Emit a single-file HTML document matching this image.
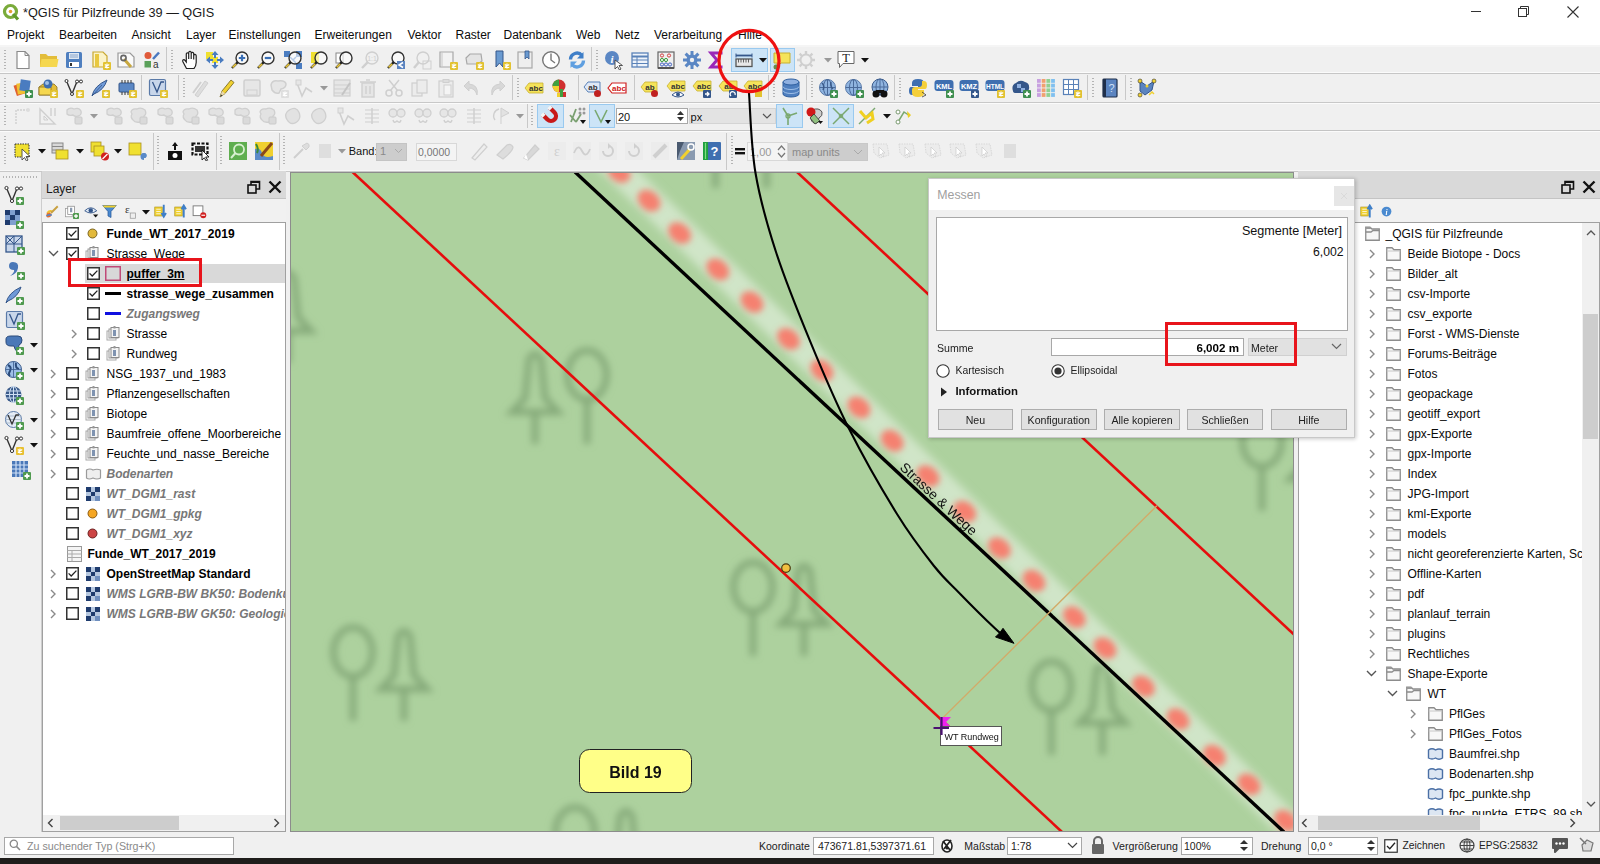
<!DOCTYPE html><html><head><meta charset="utf-8"><style>
html,body{margin:0;padding:0;}
body{width:1600px;height:864px;overflow:hidden;position:relative;background:#f0f0f0;font-family:"Liberation Sans",sans-serif;}
.t{position:absolute;white-space:pre;}
.r{position:absolute;}
</style></head><body>
<div class="r" style="left:0px;top:0px;width:1600px;height:45px;background:#fff;"></div>
<svg class="r" style="left:2px;top:3px;" width="18" height="18" viewBox="0 0 18 18"><circle cx="8.5" cy="8.5" r="6" fill="none" stroke="#7aab3a" stroke-width="3.2"/><path d="M11 11 L16 16.5" stroke="#5f9a2b" stroke-width="3.2"/><circle cx="8.5" cy="8.5" r="1.8" fill="#e0a030"/></svg>
<div class="t" style="left:23px;top:6.85px;font-size:12.7px;line-height:12.7px;font-weight:400;color:#1a1a1a;font-style:normal;">*QGIS für Pilzfreunde 39 — QGIS</div>
<div class="r" style="left:1471px;top:11px;width:10px;height:1px;background:#333;"></div>
<svg class="r" style="left:1518px;top:6px;" width="12" height="12" viewBox="0 0 12 12"><rect x="0.5" y="2.5" width="8" height="8" fill="none" stroke="#333"/><path d="M2.5 2.5 V0.5 H10.5 V8.5 H8.5" fill="none" stroke="#333"/></svg>
<svg class="r" style="left:1567px;top:6px;" width="12" height="12" viewBox="0 0 12 12"><path d="M0.5 0.5 L11.5 11.5 M11.5 0.5 L0.5 11.5" stroke="#333" stroke-width="1.1"/></svg>
<div class="t" style="left:7px;top:29.24px;font-size:12px;line-height:12px;font-weight:400;color:#0c0c0c;font-style:normal;">Projekt</div>
<div class="t" style="left:59px;top:29.24px;font-size:12px;line-height:12px;font-weight:400;color:#0c0c0c;font-style:normal;">Bearbeiten</div>
<div class="t" style="left:131.5px;top:29.24px;font-size:12px;line-height:12px;font-weight:400;color:#0c0c0c;font-style:normal;">Ansicht</div>
<div class="t" style="left:186px;top:29.24px;font-size:12px;line-height:12px;font-weight:400;color:#0c0c0c;font-style:normal;">Layer</div>
<div class="t" style="left:228.5px;top:29.24px;font-size:12px;line-height:12px;font-weight:400;color:#0c0c0c;font-style:normal;">Einstellungen</div>
<div class="t" style="left:314.5px;top:29.24px;font-size:12px;line-height:12px;font-weight:400;color:#0c0c0c;font-style:normal;">Erweiterungen</div>
<div class="t" style="left:407.5px;top:29.24px;font-size:12px;line-height:12px;font-weight:400;color:#0c0c0c;font-style:normal;">Vektor</div>
<div class="t" style="left:455.5px;top:29.24px;font-size:12px;line-height:12px;font-weight:400;color:#0c0c0c;font-style:normal;">Raster</div>
<div class="t" style="left:503.5px;top:29.24px;font-size:12px;line-height:12px;font-weight:400;color:#0c0c0c;font-style:normal;">Datenbank</div>
<div class="t" style="left:576px;top:29.24px;font-size:12px;line-height:12px;font-weight:400;color:#0c0c0c;font-style:normal;">Web</div>
<div class="t" style="left:615px;top:29.24px;font-size:12px;line-height:12px;font-weight:400;color:#0c0c0c;font-style:normal;">Netz</div>
<div class="t" style="left:654px;top:29.24px;font-size:12px;line-height:12px;font-weight:400;color:#0c0c0c;font-style:normal;">Verarbeitung</div>
<div class="t" style="left:738px;top:29.24px;font-size:12px;line-height:12px;font-weight:400;color:#0c0c0c;font-style:normal;">Hilfe</div>
<div class="r" style="left:0px;top:45px;width:1600px;height:127px;background:#f0f0f0;"></div>
<div class="r" style="left:0px;top:45px;width:1600px;height:2px;background:#f5f5f5;"></div>
<div class="r" style="left:0px;top:72px;width:1600px;height:1px;background:#fbfbfb;"></div>
<div class="r" style="left:0px;top:73px;width:1600px;height:1px;background:#c6c6c6;"></div>
<div class="r" style="left:0px;top:102px;width:1600px;height:1px;background:#c8c8c8;"></div>
<div class="r" style="left:0px;top:103px;width:1600px;height:1px;background:#fbfbfb;"></div>
<div class="r" style="left:0px;top:130px;width:1600px;height:1px;background:#c4c4c4;"></div>
<div class="r" style="left:0px;top:131px;width:1600px;height:1px;background:#fbfbfb;"></div>
<div class="r" style="left:0px;top:170px;width:1600px;height:1px;background:#f7f7f7;"></div>
<div class="r" style="left:0px;top:171px;width:1600px;height:1px;background:#c8c8c8;"></div>
<div class="r" style="left:0px;top:172px;width:41px;height:660px;background:#f0f0f0;"></div>
<div class="r" style="left:41px;top:172px;width:1px;height:660px;background:#cdcdcd;"></div>
<div class="r" style="left:42px;top:171px;width:244px;height:27px;background:#d9d9d9;"></div>
<div class="r" style="left:42px;top:198px;width:244px;height:1px;background:#c4c4c4;"></div>
<div class="t" style="left:46px;top:182.84px;font-size:12px;line-height:12px;font-weight:400;color:#1a1a1a;font-style:normal;">Layer</div>
<div class="r" style="left:42px;top:199px;width:244px;height:23px;background:#f1f1f1;"></div>
<div class="r" style="left:42px;top:222px;width:244px;height:610px;background:#fff;border:1px solid #a0a0a0;box-sizing:border-box;"></div>
<div class="r" style="left:1298px;top:171px;width:302px;height:27px;background:#d9d9d9;"></div>
<div class="r" style="left:1298px;top:198px;width:302px;height:1px;background:#c4c4c4;"></div>
<div class="r" style="left:1298px;top:199px;width:302px;height:23px;background:#f1f1f1;"></div>
<div class="r" style="left:1298px;top:222px;width:302px;height:610px;background:#fff;border:1px solid #a0a0a0;box-sizing:border-box;"></div>
<div class="r" style="left:0px;top:832px;width:1600px;height:26px;background:#f0f0f0;"></div>
<div class="r" style="left:0px;top:858px;width:1600px;height:6px;background:#1f1d1b;"></div>
<svg class="r" style="left:290px;top:172px;" width="1004" height="660" viewBox="290 172 1004 660">
<defs>
<filter id="bl3" x="-20%" y="-20%" width="140%" height="140%"><feGaussianBlur stdDeviation="3.6"/></filter>
<filter id="bl4" x="-20%" y="-20%" width="140%" height="140%"><feGaussianBlur stdDeviation="4"/></filter>
<filter id="bl2" x="-50%" y="-50%" width="200%" height="200%"><feGaussianBlur stdDeviation="3.4"/></filter>
</defs>
<rect x="290" y="172" width="1004" height="660" fill="#add19e"/>
<g stroke="#86aa7a" stroke-width="6.5" fill="none" filter="url(#bl3)"><ellipse cx="353" cy="652" rx="19.5" ry="24.5" fill="none"/><path d="M353 677 V721"/><path d="M398 636 Q404 626 410 636 L414 675 L427 689 H381 L394 675 Z" fill="none"/><path d="M404 689 V721"/><path d="M529 359 Q535 349 541 359 L545 398 L558 412 H512 L525 398 Z" fill="none"/><path d="M535 412 V444"/><ellipse cx="587" cy="375" rx="19.5" ry="24.5" fill="none"/><path d="M587 400 V444"/><ellipse cx="753" cy="587" rx="19.5" ry="24.5" fill="none"/><path d="M753 612 V656"/><path d="M798 571 Q804 561 810 571 L814 610 L827 624 H781 L794 610 Z" fill="none"/><path d="M804 624 V656"/><ellipse cx="1051.5" cy="686" rx="19.5" ry="24.5" fill="none"/><path d="M1051.5 711 V755"/><path d="M1096.5 670 Q1102.5 660 1108.5 670 L1112.5 709 L1125.5 723 H1079.5 L1092.5 709 Z" fill="none"/><path d="M1102.5 723 V755"/><ellipse cx="575" cy="832" rx="19.5" ry="24.5" fill="none"/><path d="M575 857 V901"/><path d="M620 816 Q626 806 632 816 L636 855 L649 869 H603 L616 855 Z" fill="none"/><path d="M626 869 V901"/><ellipse cx="715.5" cy="119" rx="19.5" ry="24.5" fill="none"/><path d="M715.5 144 V188"/><path d="M760.5 103 Q766.5 93 772.5 103 L776.5 142 L789.5 156 H743.5 L756.5 142 Z" fill="none"/><path d="M766.5 156 V188"/><ellipse cx="237" cy="294" rx="19.5" ry="24.5" fill="none"/><path d="M237 319 V363"/><path d="M282 278 Q288 268 294 278 L298 317 L311 331 H265 L278 317 Z" fill="none"/><path d="M288 331 V363"/><ellipse cx="1262" cy="442" rx="19.5" ry="24.5" fill="none"/><path d="M1262 467 V511"/><path d="M1307 426 Q1313 416 1319 426 L1323 465 L1336 479 H1290 L1303 465 Z" fill="none"/><path d="M1313 479 V511"/></g>
<path d="M600 152 L1318 854" stroke="#d0e5c8" stroke-width="27" filter="url(#bl4)"/>
<g fill="#f5806f" filter="url(#bl2)"><ellipse cx="619" cy="172" rx="12.5" ry="9.5" transform="rotate(40 619 172)"/><ellipse cx="649" cy="200.6" rx="12.5" ry="9.5" transform="rotate(40 649 200.6)"/><ellipse cx="679.6" cy="233" rx="12.5" ry="9.5" transform="rotate(40 679.6 233)"/><ellipse cx="717.8" cy="269.4" rx="12.5" ry="9.5" transform="rotate(40 717.8 269.4)"/><ellipse cx="752" cy="302" rx="12.5" ry="9.5" transform="rotate(40 752 302)"/><ellipse cx="788.5" cy="338.9" rx="12.5" ry="9.5" transform="rotate(40 788.5 338.9)"/><ellipse cx="821.9" cy="370.4" rx="12.5" ry="9.5" transform="rotate(40 821.9 370.4)"/><ellipse cx="858.9" cy="407.4" rx="12.5" ry="9.5" transform="rotate(40 858.9 407.4)"/><ellipse cx="892.2" cy="440.7" rx="12.5" ry="9.5" transform="rotate(40 892.2 440.7)"/><ellipse cx="928" cy="476" rx="12.5" ry="9.5" transform="rotate(40 928 476)"/><ellipse cx="964.8" cy="511.5" rx="12.5" ry="9.5" transform="rotate(40 964.8 511.5)"/><ellipse cx="999.4" cy="548" rx="12.5" ry="9.5" transform="rotate(40 999.4 548)"/><ellipse cx="1034" cy="580.7" rx="12.5" ry="9.5" transform="rotate(40 1034 580.7)"/><ellipse cx="1074.3" cy="617.2" rx="12.5" ry="9.5" transform="rotate(40 1074.3 617.2)"/><ellipse cx="1105" cy="648" rx="12.5" ry="9.5" transform="rotate(40 1105 648)"/><ellipse cx="1143.4" cy="686.3" rx="12.5" ry="9.5" transform="rotate(40 1143.4 686.3)"/><ellipse cx="1178" cy="719" rx="12.5" ry="9.5" transform="rotate(40 1178 719)"/><ellipse cx="1214.5" cy="755.5" rx="12.5" ry="9.5" transform="rotate(40 1214.5 755.5)"/><ellipse cx="1249" cy="784.3" rx="12.5" ry="9.5" transform="rotate(40 1249 784.3)"/><ellipse cx="1285.6" cy="820.8" rx="12.5" ry="9.5" transform="rotate(40 1285.6 820.8)"/></g>
<path d="M352.5 172 L1062 832" stroke="#e60d0d" stroke-width="2.6"/>
<path d="M797 172 L1294 634.5" stroke="#e60d0d" stroke-width="2.6"/>
<path d="M575 172 L1284 832" stroke="#000" stroke-width="3.4"/>
<path d="M941.7 719 L1156.9 505.8" stroke="#d2aa68" stroke-width="1.3"/>
<circle cx="786" cy="568.1" r="4.3" fill="#f0c040" stroke="#4a3a10" stroke-width="1.2"/>
<text x="0" y="0" font-family="Liberation Sans" font-size="13.8" fill="#111" transform="translate(899 468.5) rotate(42.97)">Strasse &amp; Wege</text>
<path d="M940 717 L951 717 L946 722 L951 727 L940 727 Z" fill="#ee22ee"/>
<rect x="940.5" y="726.5" width="61" height="19" fill="#fff" stroke="#555" stroke-width="1"/>
<path d="M941.5 717 V735 M933.5 728 H949" stroke="#4a1070" stroke-width="2.2"/>
<text x="944.5" y="740" font-family="Liberation Sans" font-size="9" fill="#111">WT Rundweg</text>
<rect x="579.5" y="749.5" width="112" height="43" rx="10" ry="10" fill="#ffff88" stroke="#222" stroke-width="1"/>
<text x="635.5" y="777.5" text-anchor="middle" font-family="Liberation Sans" font-size="16" font-weight="700" fill="#111">Bild 19</text>
<rect x="290.5" y="172.5" width="1003" height="659" fill="none" stroke="#8c8c8c" stroke-width="1"/>
</svg>
<div class="r" style="left:85px;top:263.5px;width:200px;height:19.5px;background:#d9d9d9;"></div>
<div class="r" style="left:0;top:0;width:1600px;height:864px;clip-path:inset(223px 1315px 49px 43px)">
<svg class="r" style="left:66px;top:227.0px;" width="13" height="13" viewBox="0 0 13 13"><rect x="0.75" y="0.75" width="11.5" height="11.5" fill="#fff" stroke="#333" stroke-width="1.5"/><path d="M2.6 6.4 L5.2 9 L10.4 3.6" fill="none" stroke="#222" stroke-width="1.3"/></svg>
<svg class="r" style="left:86.5px;top:228.0px;" width="11" height="11" viewBox="0 0 11 11"><circle cx="5.5" cy="5.5" r="4.5" fill="#e2b93b" stroke="#7a6420" stroke-width="1"/></svg>
<div class="t" style="left:106.5px;top:227.84px;font-size:12px;line-height:12px;font-weight:700;color:#000;font-style:normal;">Funde_WT_2017_2019</div>
<svg class="r" style="left:48px;top:249.5px;" width="11" height="7" viewBox="0 0 11 7"><path d="M1 1 L5.5 5.5 L10 1" fill="none" stroke="#555" stroke-width="1.4"/></svg>
<svg class="r" style="left:66px;top:247.0px;" width="13" height="13" viewBox="0 0 13 13"><rect x="0.75" y="0.75" width="11.5" height="11.5" fill="#fff" stroke="#333" stroke-width="1.5"/><path d="M2.6 6.4 L5.2 9 L10.4 3.6" fill="none" stroke="#222" stroke-width="1.3"/></svg>
<svg class="r" style="left:85px;top:246.0px;" width="15" height="15" viewBox="0 0 15 15"><rect x="1" y="5" width="9" height="9" fill="#fff" stroke="#a8a8a8"/><rect x="3" y="3" width="9" height="9" fill="#fff" stroke="#9a9a9a"/><rect x="5" y="1.5" width="8" height="10" fill="#f4f4f4" stroke="#8a8a8a"/><rect x="7" y="4" width="3" height="6" fill="#7f93b0"/><rect x="7.5" y="0" width="2" height="2.5" fill="#999"/></svg>
<div class="t" style="left:106.5px;top:247.84px;font-size:12px;line-height:12px;font-weight:400;color:#000;font-style:normal;">Strasse_Wege</div>
<svg class="r" style="left:87px;top:267.0px;" width="13" height="13" viewBox="0 0 13 13"><rect x="0.75" y="0.75" width="11.5" height="11.5" fill="#fff" stroke="#333" stroke-width="1.5"/><path d="M2.6 6.4 L5.2 9 L10.4 3.6" fill="none" stroke="#222" stroke-width="1.3"/></svg>
<svg class="r" style="left:105px;top:266.0px;" width="16" height="15" viewBox="0 0 16 15"><rect x="0.75" y="0.75" width="14.5" height="13.5" fill="#d8d8d8" stroke="#c04a78" stroke-width="1.5"/></svg>
<div class="t" style="left:126.5px;top:267.84px;font-size:12px;line-height:12px;font-weight:700;color:#000;font-style:normal;text-decoration:underline;">puffer_3m</div>
<svg class="r" style="left:87px;top:287.0px;" width="13" height="13" viewBox="0 0 13 13"><rect x="0.75" y="0.75" width="11.5" height="11.5" fill="#fff" stroke="#333" stroke-width="1.5"/><path d="M2.6 6.4 L5.2 9 L10.4 3.6" fill="none" stroke="#222" stroke-width="1.3"/></svg>
<div class="r" style="left:105px;top:292.0px;width:16px;height:3px;background:#000;"></div>
<div class="t" style="left:126.5px;top:287.84px;font-size:12px;line-height:12px;font-weight:700;color:#000;font-style:normal;">strasse_wege_zusammen</div>
<svg class="r" style="left:87px;top:307.0px;" width="13" height="13" viewBox="0 0 13 13"><rect x="0.75" y="0.75" width="11.5" height="11.5" fill="#fff" stroke="#333" stroke-width="1.5"/></svg>
<div class="r" style="left:105px;top:312.0px;width:16px;height:3px;background:#1010e0;"></div>
<div class="t" style="left:126.5px;top:307.84px;font-size:12px;line-height:12px;font-weight:700;color:#777;font-style:italic;">Zugangsweg</div>
<svg class="r" style="left:71px;top:328.5px;" width="7" height="10" viewBox="0 0 7 10"><path d="M1 1 L5 5 L1 9" fill="none" stroke="#8a8a8a" stroke-width="1.4"/></svg>
<svg class="r" style="left:87px;top:327.0px;" width="13" height="13" viewBox="0 0 13 13"><rect x="0.75" y="0.75" width="11.5" height="11.5" fill="#fff" stroke="#333" stroke-width="1.5"/></svg>
<svg class="r" style="left:106px;top:326.0px;" width="15" height="15" viewBox="0 0 15 15"><rect x="1" y="5" width="9" height="9" fill="#fff" stroke="#a8a8a8"/><rect x="3" y="3" width="9" height="9" fill="#fff" stroke="#9a9a9a"/><rect x="5" y="1.5" width="8" height="10" fill="#f4f4f4" stroke="#8a8a8a"/><rect x="7" y="4" width="3" height="6" fill="#7f93b0"/><rect x="7.5" y="0" width="2" height="2.5" fill="#999"/></svg>
<div class="t" style="left:126.5px;top:327.84px;font-size:12px;line-height:12px;font-weight:400;color:#000;font-style:normal;">Strasse</div>
<svg class="r" style="left:71px;top:348.5px;" width="7" height="10" viewBox="0 0 7 10"><path d="M1 1 L5 5 L1 9" fill="none" stroke="#8a8a8a" stroke-width="1.4"/></svg>
<svg class="r" style="left:87px;top:347.0px;" width="13" height="13" viewBox="0 0 13 13"><rect x="0.75" y="0.75" width="11.5" height="11.5" fill="#fff" stroke="#333" stroke-width="1.5"/></svg>
<svg class="r" style="left:106px;top:346.0px;" width="15" height="15" viewBox="0 0 15 15"><rect x="1" y="5" width="9" height="9" fill="#fff" stroke="#a8a8a8"/><rect x="3" y="3" width="9" height="9" fill="#fff" stroke="#9a9a9a"/><rect x="5" y="1.5" width="8" height="10" fill="#f4f4f4" stroke="#8a8a8a"/><rect x="7" y="4" width="3" height="6" fill="#7f93b0"/><rect x="7.5" y="0" width="2" height="2.5" fill="#999"/></svg>
<div class="t" style="left:126.5px;top:347.84px;font-size:12px;line-height:12px;font-weight:400;color:#000;font-style:normal;">Rundweg</div>
<svg class="r" style="left:50px;top:368.5px;" width="7" height="10" viewBox="0 0 7 10"><path d="M1 1 L5 5 L1 9" fill="none" stroke="#8a8a8a" stroke-width="1.4"/></svg>
<svg class="r" style="left:66px;top:367.0px;" width="13" height="13" viewBox="0 0 13 13"><rect x="0.75" y="0.75" width="11.5" height="11.5" fill="#fff" stroke="#333" stroke-width="1.5"/></svg>
<svg class="r" style="left:85px;top:366.0px;" width="15" height="15" viewBox="0 0 15 15"><rect x="1" y="5" width="9" height="9" fill="#fff" stroke="#a8a8a8"/><rect x="3" y="3" width="9" height="9" fill="#fff" stroke="#9a9a9a"/><rect x="5" y="1.5" width="8" height="10" fill="#f4f4f4" stroke="#8a8a8a"/><rect x="7" y="4" width="3" height="6" fill="#7f93b0"/><rect x="7.5" y="0" width="2" height="2.5" fill="#999"/></svg>
<div class="t" style="left:106.5px;top:367.84px;font-size:12px;line-height:12px;font-weight:400;color:#000;font-style:normal;">NSG_1937_und_1983</div>
<svg class="r" style="left:50px;top:388.5px;" width="7" height="10" viewBox="0 0 7 10"><path d="M1 1 L5 5 L1 9" fill="none" stroke="#8a8a8a" stroke-width="1.4"/></svg>
<svg class="r" style="left:66px;top:387.0px;" width="13" height="13" viewBox="0 0 13 13"><rect x="0.75" y="0.75" width="11.5" height="11.5" fill="#fff" stroke="#333" stroke-width="1.5"/></svg>
<svg class="r" style="left:85px;top:386.0px;" width="15" height="15" viewBox="0 0 15 15"><rect x="1" y="5" width="9" height="9" fill="#fff" stroke="#a8a8a8"/><rect x="3" y="3" width="9" height="9" fill="#fff" stroke="#9a9a9a"/><rect x="5" y="1.5" width="8" height="10" fill="#f4f4f4" stroke="#8a8a8a"/><rect x="7" y="4" width="3" height="6" fill="#7f93b0"/><rect x="7.5" y="0" width="2" height="2.5" fill="#999"/></svg>
<div class="t" style="left:106.5px;top:387.84px;font-size:12px;line-height:12px;font-weight:400;color:#000;font-style:normal;">Pflanzengesellschaften</div>
<svg class="r" style="left:50px;top:408.5px;" width="7" height="10" viewBox="0 0 7 10"><path d="M1 1 L5 5 L1 9" fill="none" stroke="#8a8a8a" stroke-width="1.4"/></svg>
<svg class="r" style="left:66px;top:407.0px;" width="13" height="13" viewBox="0 0 13 13"><rect x="0.75" y="0.75" width="11.5" height="11.5" fill="#fff" stroke="#333" stroke-width="1.5"/></svg>
<svg class="r" style="left:85px;top:406.0px;" width="15" height="15" viewBox="0 0 15 15"><rect x="1" y="5" width="9" height="9" fill="#fff" stroke="#a8a8a8"/><rect x="3" y="3" width="9" height="9" fill="#fff" stroke="#9a9a9a"/><rect x="5" y="1.5" width="8" height="10" fill="#f4f4f4" stroke="#8a8a8a"/><rect x="7" y="4" width="3" height="6" fill="#7f93b0"/><rect x="7.5" y="0" width="2" height="2.5" fill="#999"/></svg>
<div class="t" style="left:106.5px;top:407.84px;font-size:12px;line-height:12px;font-weight:400;color:#000;font-style:normal;">Biotope</div>
<svg class="r" style="left:50px;top:428.5px;" width="7" height="10" viewBox="0 0 7 10"><path d="M1 1 L5 5 L1 9" fill="none" stroke="#8a8a8a" stroke-width="1.4"/></svg>
<svg class="r" style="left:66px;top:427.0px;" width="13" height="13" viewBox="0 0 13 13"><rect x="0.75" y="0.75" width="11.5" height="11.5" fill="#fff" stroke="#333" stroke-width="1.5"/></svg>
<svg class="r" style="left:85px;top:426.0px;" width="15" height="15" viewBox="0 0 15 15"><rect x="1" y="5" width="9" height="9" fill="#fff" stroke="#a8a8a8"/><rect x="3" y="3" width="9" height="9" fill="#fff" stroke="#9a9a9a"/><rect x="5" y="1.5" width="8" height="10" fill="#f4f4f4" stroke="#8a8a8a"/><rect x="7" y="4" width="3" height="6" fill="#7f93b0"/><rect x="7.5" y="0" width="2" height="2.5" fill="#999"/></svg>
<div class="t" style="left:106.5px;top:427.84px;font-size:12px;line-height:12px;font-weight:400;color:#000;font-style:normal;">Baumfreie_offene_Moorbereiche</div>
<svg class="r" style="left:50px;top:448.5px;" width="7" height="10" viewBox="0 0 7 10"><path d="M1 1 L5 5 L1 9" fill="none" stroke="#8a8a8a" stroke-width="1.4"/></svg>
<svg class="r" style="left:66px;top:447.0px;" width="13" height="13" viewBox="0 0 13 13"><rect x="0.75" y="0.75" width="11.5" height="11.5" fill="#fff" stroke="#333" stroke-width="1.5"/></svg>
<svg class="r" style="left:85px;top:446.0px;" width="15" height="15" viewBox="0 0 15 15"><rect x="1" y="5" width="9" height="9" fill="#fff" stroke="#a8a8a8"/><rect x="3" y="3" width="9" height="9" fill="#fff" stroke="#9a9a9a"/><rect x="5" y="1.5" width="8" height="10" fill="#f4f4f4" stroke="#8a8a8a"/><rect x="7" y="4" width="3" height="6" fill="#7f93b0"/><rect x="7.5" y="0" width="2" height="2.5" fill="#999"/></svg>
<div class="t" style="left:106.5px;top:447.84px;font-size:12px;line-height:12px;font-weight:400;color:#000;font-style:normal;">Feuchte_und_nasse_Bereiche</div>
<svg class="r" style="left:50px;top:468.5px;" width="7" height="10" viewBox="0 0 7 10"><path d="M1 1 L5 5 L1 9" fill="none" stroke="#8a8a8a" stroke-width="1.4"/></svg>
<svg class="r" style="left:66px;top:467.0px;" width="13" height="13" viewBox="0 0 13 13"><rect x="0.75" y="0.75" width="11.5" height="11.5" fill="#fff" stroke="#333" stroke-width="1.5"/></svg>
<svg class="r" style="left:85px;top:466.5px;" width="17" height="14" viewBox="0 0 17 14"><path d="M1.5 3 Q5 1 8 3 Q12 1.5 15.5 3 V11 Q12 13 8 11 Q4 13 1.5 11 Z" fill="#eee" stroke="#9a9a9a" stroke-width="1.2"/></svg>
<div class="t" style="left:106.5px;top:467.84px;font-size:12px;line-height:12px;font-weight:700;color:#777;font-style:italic;">Bodenarten</div>
<svg class="r" style="left:66px;top:487.0px;" width="13" height="13" viewBox="0 0 13 13"><rect x="0.75" y="0.75" width="11.5" height="11.5" fill="#fff" stroke="#333" stroke-width="1.5"/></svg>
<svg class="r" style="left:86px;top:486.5px;" width="14" height="14" viewBox="0 0 14 14"><rect x="0" y="0" width="14" height="14" fill="#b6c8e0"/><rect x="0" y="0" width="5" height="5" fill="#1f3c6e"/><rect x="9" y="0" width="5" height="5" fill="#1f3c6e"/><rect x="5" y="5" width="4" height="4" fill="#1f3c6e"/><rect x="0" y="9" width="5" height="5" fill="#1f3c6e"/><rect x="9" y="9" width="5" height="5" fill="#6f8fbf"/></svg>
<div class="t" style="left:106.5px;top:487.84px;font-size:12px;line-height:12px;font-weight:700;color:#777;font-style:italic;">WT_DGM1_rast</div>
<svg class="r" style="left:66px;top:507.0px;" width="13" height="13" viewBox="0 0 13 13"><rect x="0.75" y="0.75" width="11.5" height="11.5" fill="#fff" stroke="#333" stroke-width="1.5"/></svg>
<svg class="r" style="left:86.5px;top:508.0px;" width="11" height="11" viewBox="0 0 11 11"><circle cx="5.5" cy="5.5" r="4.5" fill="#f5a623" stroke="#8a5a10" stroke-width="1"/></svg>
<div class="t" style="left:106.5px;top:507.84px;font-size:12px;line-height:12px;font-weight:700;color:#777;font-style:italic;">WT_DGM1_gpkg</div>
<svg class="r" style="left:66px;top:527.0px;" width="13" height="13" viewBox="0 0 13 13"><rect x="0.75" y="0.75" width="11.5" height="11.5" fill="#fff" stroke="#333" stroke-width="1.5"/></svg>
<svg class="r" style="left:86.5px;top:528.0px;" width="11" height="11" viewBox="0 0 11 11"><circle cx="5.5" cy="5.5" r="4.5" fill="#cc4444" stroke="#6a2020" stroke-width="1"/></svg>
<div class="t" style="left:106.5px;top:527.84px;font-size:12px;line-height:12px;font-weight:700;color:#777;font-style:italic;">WT_DGM1_xyz</div>
<svg class="r" style="left:67px;top:545.5px;" width="15" height="16" viewBox="0 0 15 16"><rect x="0.5" y="0.5" width="14" height="15" fill="#f4f4f4" stroke="#999"/><path d="M0.5 4.5 H14.5 M0.5 8 H14.5 M0.5 11.5 H14.5 M5 4.5 V15.5" stroke="#aaa"/></svg>
<div class="t" style="left:87.5px;top:547.84px;font-size:12px;line-height:12px;font-weight:700;color:#000;font-style:normal;">Funde_WT_2017_2019</div>
<svg class="r" style="left:50px;top:568.5px;" width="7" height="10" viewBox="0 0 7 10"><path d="M1 1 L5 5 L1 9" fill="none" stroke="#8a8a8a" stroke-width="1.4"/></svg>
<svg class="r" style="left:66px;top:567.0px;" width="13" height="13" viewBox="0 0 13 13"><rect x="0.75" y="0.75" width="11.5" height="11.5" fill="#fff" stroke="#333" stroke-width="1.5"/><path d="M2.6 6.4 L5.2 9 L10.4 3.6" fill="none" stroke="#222" stroke-width="1.3"/></svg>
<svg class="r" style="left:86px;top:566.5px;" width="14" height="14" viewBox="0 0 14 14"><rect x="0" y="0" width="14" height="14" fill="#b6c8e0"/><rect x="0" y="0" width="5" height="5" fill="#1f3c6e"/><rect x="9" y="0" width="5" height="5" fill="#1f3c6e"/><rect x="5" y="5" width="4" height="4" fill="#1f3c6e"/><rect x="0" y="9" width="5" height="5" fill="#1f3c6e"/><rect x="9" y="9" width="5" height="5" fill="#6f8fbf"/></svg>
<div class="t" style="left:106.5px;top:567.84px;font-size:12px;line-height:12px;font-weight:700;color:#000;font-style:normal;">OpenStreetMap Standard</div>
<svg class="r" style="left:50px;top:588.5px;" width="7" height="10" viewBox="0 0 7 10"><path d="M1 1 L5 5 L1 9" fill="none" stroke="#8a8a8a" stroke-width="1.4"/></svg>
<svg class="r" style="left:66px;top:587.0px;" width="13" height="13" viewBox="0 0 13 13"><rect x="0.75" y="0.75" width="11.5" height="11.5" fill="#fff" stroke="#333" stroke-width="1.5"/></svg>
<svg class="r" style="left:86px;top:586.5px;" width="14" height="14" viewBox="0 0 14 14"><rect x="0" y="0" width="14" height="14" fill="#b6c8e0"/><rect x="0" y="0" width="5" height="5" fill="#1f3c6e"/><rect x="9" y="0" width="5" height="5" fill="#1f3c6e"/><rect x="5" y="5" width="4" height="4" fill="#1f3c6e"/><rect x="0" y="9" width="5" height="5" fill="#1f3c6e"/><rect x="9" y="9" width="5" height="5" fill="#6f8fbf"/></svg>
<div class="t" style="left:106.5px;top:587.84px;font-size:12px;line-height:12px;font-weight:700;color:#777;font-style:italic;">WMS LGRB-BW BK50: Bodenkunde</div>
<svg class="r" style="left:50px;top:608.5px;" width="7" height="10" viewBox="0 0 7 10"><path d="M1 1 L5 5 L1 9" fill="none" stroke="#8a8a8a" stroke-width="1.4"/></svg>
<svg class="r" style="left:66px;top:607.0px;" width="13" height="13" viewBox="0 0 13 13"><rect x="0.75" y="0.75" width="11.5" height="11.5" fill="#fff" stroke="#333" stroke-width="1.5"/></svg>
<svg class="r" style="left:86px;top:606.5px;" width="14" height="14" viewBox="0 0 14 14"><rect x="0" y="0" width="14" height="14" fill="#b6c8e0"/><rect x="0" y="0" width="5" height="5" fill="#1f3c6e"/><rect x="9" y="0" width="5" height="5" fill="#1f3c6e"/><rect x="5" y="5" width="4" height="4" fill="#1f3c6e"/><rect x="0" y="9" width="5" height="5" fill="#1f3c6e"/><rect x="9" y="9" width="5" height="5" fill="#6f8fbf"/></svg>
<div class="t" style="left:106.5px;top:607.84px;font-size:12px;line-height:12px;font-weight:700;color:#777;font-style:italic;">WMS LGRB-BW GK50: Geologie</div>
</div>
<div class="r" style="left:0;top:0;width:1600px;height:864px;clip-path:inset(223px 18px 49px 1299px)">
<svg class="r" style="left:1365px;top:226.0px;" width="15" height="15" viewBox="0 0 15 15"><path d="M0.75 1.25 H5 L7 3 H14.25 V14.25 H0.75 Z" fill="#f7f7f7" stroke="#8c8c8c" stroke-width="1.3"/><path d="M0.75 6 H6 L8 4.5 H14.25" fill="none" stroke="#8c8c8c" stroke-width="1.3"/><rect x="1" y="1" width="5" height="2" fill="#999"/></svg>
<div class="t" style="left:1385.5px;top:227.84px;font-size:12px;line-height:12px;font-weight:400;color:#0a0a0a;font-style:normal;">_QGIS für Pilzfreunde</div>
<svg class="r" style="left:1369px;top:248.5px;" width="7" height="10" viewBox="0 0 7 10"><path d="M1 1 L5 5 L1 9" fill="none" stroke="#8a8a8a" stroke-width="1.4"/></svg>
<svg class="r" style="left:1386px;top:246.5px;" width="15" height="14" viewBox="0 0 15 14"><path d="M0.75 0.75 H6 L8 2.75 H14.25 V13.25 H0.75 Z" fill="#f7f7f7" stroke="#8c8c8c" stroke-width="1.3"/><path d="M0.75 4 H14.25" stroke="#c8c8c8" stroke-width="1"/></svg>
<div class="t" style="left:1407.5px;top:247.84px;font-size:12px;line-height:12px;font-weight:400;color:#0a0a0a;font-style:normal;">Beide Biotope - Docs</div>
<svg class="r" style="left:1369px;top:268.5px;" width="7" height="10" viewBox="0 0 7 10"><path d="M1 1 L5 5 L1 9" fill="none" stroke="#8a8a8a" stroke-width="1.4"/></svg>
<svg class="r" style="left:1386px;top:266.5px;" width="15" height="14" viewBox="0 0 15 14"><path d="M0.75 0.75 H6 L8 2.75 H14.25 V13.25 H0.75 Z" fill="#f7f7f7" stroke="#8c8c8c" stroke-width="1.3"/><path d="M0.75 4 H14.25" stroke="#c8c8c8" stroke-width="1"/></svg>
<div class="t" style="left:1407.5px;top:267.84px;font-size:12px;line-height:12px;font-weight:400;color:#0a0a0a;font-style:normal;">Bilder_alt</div>
<svg class="r" style="left:1369px;top:288.5px;" width="7" height="10" viewBox="0 0 7 10"><path d="M1 1 L5 5 L1 9" fill="none" stroke="#8a8a8a" stroke-width="1.4"/></svg>
<svg class="r" style="left:1386px;top:286.5px;" width="15" height="14" viewBox="0 0 15 14"><path d="M0.75 0.75 H6 L8 2.75 H14.25 V13.25 H0.75 Z" fill="#f7f7f7" stroke="#8c8c8c" stroke-width="1.3"/><path d="M0.75 4 H14.25" stroke="#c8c8c8" stroke-width="1"/></svg>
<div class="t" style="left:1407.5px;top:287.84px;font-size:12px;line-height:12px;font-weight:400;color:#0a0a0a;font-style:normal;">csv-Importe</div>
<svg class="r" style="left:1369px;top:308.5px;" width="7" height="10" viewBox="0 0 7 10"><path d="M1 1 L5 5 L1 9" fill="none" stroke="#8a8a8a" stroke-width="1.4"/></svg>
<svg class="r" style="left:1386px;top:306.5px;" width="15" height="14" viewBox="0 0 15 14"><path d="M0.75 0.75 H6 L8 2.75 H14.25 V13.25 H0.75 Z" fill="#f7f7f7" stroke="#8c8c8c" stroke-width="1.3"/><path d="M0.75 4 H14.25" stroke="#c8c8c8" stroke-width="1"/></svg>
<div class="t" style="left:1407.5px;top:307.84px;font-size:12px;line-height:12px;font-weight:400;color:#0a0a0a;font-style:normal;">csv_exporte</div>
<svg class="r" style="left:1369px;top:328.5px;" width="7" height="10" viewBox="0 0 7 10"><path d="M1 1 L5 5 L1 9" fill="none" stroke="#8a8a8a" stroke-width="1.4"/></svg>
<svg class="r" style="left:1386px;top:326.5px;" width="15" height="14" viewBox="0 0 15 14"><path d="M0.75 0.75 H6 L8 2.75 H14.25 V13.25 H0.75 Z" fill="#f7f7f7" stroke="#8c8c8c" stroke-width="1.3"/><path d="M0.75 4 H14.25" stroke="#c8c8c8" stroke-width="1"/></svg>
<div class="t" style="left:1407.5px;top:327.84px;font-size:12px;line-height:12px;font-weight:400;color:#0a0a0a;font-style:normal;">Forst - WMS-Dienste</div>
<svg class="r" style="left:1369px;top:348.5px;" width="7" height="10" viewBox="0 0 7 10"><path d="M1 1 L5 5 L1 9" fill="none" stroke="#8a8a8a" stroke-width="1.4"/></svg>
<svg class="r" style="left:1386px;top:346.5px;" width="15" height="14" viewBox="0 0 15 14"><path d="M0.75 0.75 H6 L8 2.75 H14.25 V13.25 H0.75 Z" fill="#f7f7f7" stroke="#8c8c8c" stroke-width="1.3"/><path d="M0.75 4 H14.25" stroke="#c8c8c8" stroke-width="1"/></svg>
<div class="t" style="left:1407.5px;top:347.84px;font-size:12px;line-height:12px;font-weight:400;color:#0a0a0a;font-style:normal;">Forums-Beiträge</div>
<svg class="r" style="left:1369px;top:368.5px;" width="7" height="10" viewBox="0 0 7 10"><path d="M1 1 L5 5 L1 9" fill="none" stroke="#8a8a8a" stroke-width="1.4"/></svg>
<svg class="r" style="left:1386px;top:366.5px;" width="15" height="14" viewBox="0 0 15 14"><path d="M0.75 0.75 H6 L8 2.75 H14.25 V13.25 H0.75 Z" fill="#f7f7f7" stroke="#8c8c8c" stroke-width="1.3"/><path d="M0.75 4 H14.25" stroke="#c8c8c8" stroke-width="1"/></svg>
<div class="t" style="left:1407.5px;top:367.84px;font-size:12px;line-height:12px;font-weight:400;color:#0a0a0a;font-style:normal;">Fotos</div>
<svg class="r" style="left:1369px;top:388.5px;" width="7" height="10" viewBox="0 0 7 10"><path d="M1 1 L5 5 L1 9" fill="none" stroke="#8a8a8a" stroke-width="1.4"/></svg>
<svg class="r" style="left:1386px;top:386.5px;" width="15" height="14" viewBox="0 0 15 14"><path d="M0.75 0.75 H6 L8 2.75 H14.25 V13.25 H0.75 Z" fill="#f7f7f7" stroke="#8c8c8c" stroke-width="1.3"/><path d="M0.75 4 H14.25" stroke="#c8c8c8" stroke-width="1"/></svg>
<div class="t" style="left:1407.5px;top:387.84px;font-size:12px;line-height:12px;font-weight:400;color:#0a0a0a;font-style:normal;">geopackage</div>
<svg class="r" style="left:1369px;top:408.5px;" width="7" height="10" viewBox="0 0 7 10"><path d="M1 1 L5 5 L1 9" fill="none" stroke="#8a8a8a" stroke-width="1.4"/></svg>
<svg class="r" style="left:1386px;top:406.5px;" width="15" height="14" viewBox="0 0 15 14"><path d="M0.75 0.75 H6 L8 2.75 H14.25 V13.25 H0.75 Z" fill="#f7f7f7" stroke="#8c8c8c" stroke-width="1.3"/><path d="M0.75 4 H14.25" stroke="#c8c8c8" stroke-width="1"/></svg>
<div class="t" style="left:1407.5px;top:407.84px;font-size:12px;line-height:12px;font-weight:400;color:#0a0a0a;font-style:normal;">geotiff_export</div>
<svg class="r" style="left:1369px;top:428.5px;" width="7" height="10" viewBox="0 0 7 10"><path d="M1 1 L5 5 L1 9" fill="none" stroke="#8a8a8a" stroke-width="1.4"/></svg>
<svg class="r" style="left:1386px;top:426.5px;" width="15" height="14" viewBox="0 0 15 14"><path d="M0.75 0.75 H6 L8 2.75 H14.25 V13.25 H0.75 Z" fill="#f7f7f7" stroke="#8c8c8c" stroke-width="1.3"/><path d="M0.75 4 H14.25" stroke="#c8c8c8" stroke-width="1"/></svg>
<div class="t" style="left:1407.5px;top:427.84px;font-size:12px;line-height:12px;font-weight:400;color:#0a0a0a;font-style:normal;">gpx-Exporte</div>
<svg class="r" style="left:1369px;top:448.5px;" width="7" height="10" viewBox="0 0 7 10"><path d="M1 1 L5 5 L1 9" fill="none" stroke="#8a8a8a" stroke-width="1.4"/></svg>
<svg class="r" style="left:1386px;top:446.5px;" width="15" height="14" viewBox="0 0 15 14"><path d="M0.75 0.75 H6 L8 2.75 H14.25 V13.25 H0.75 Z" fill="#f7f7f7" stroke="#8c8c8c" stroke-width="1.3"/><path d="M0.75 4 H14.25" stroke="#c8c8c8" stroke-width="1"/></svg>
<div class="t" style="left:1407.5px;top:447.84px;font-size:12px;line-height:12px;font-weight:400;color:#0a0a0a;font-style:normal;">gpx-Importe</div>
<svg class="r" style="left:1369px;top:468.5px;" width="7" height="10" viewBox="0 0 7 10"><path d="M1 1 L5 5 L1 9" fill="none" stroke="#8a8a8a" stroke-width="1.4"/></svg>
<svg class="r" style="left:1386px;top:466.5px;" width="15" height="14" viewBox="0 0 15 14"><path d="M0.75 0.75 H6 L8 2.75 H14.25 V13.25 H0.75 Z" fill="#f7f7f7" stroke="#8c8c8c" stroke-width="1.3"/><path d="M0.75 4 H14.25" stroke="#c8c8c8" stroke-width="1"/></svg>
<div class="t" style="left:1407.5px;top:467.84px;font-size:12px;line-height:12px;font-weight:400;color:#0a0a0a;font-style:normal;">Index</div>
<svg class="r" style="left:1369px;top:488.5px;" width="7" height="10" viewBox="0 0 7 10"><path d="M1 1 L5 5 L1 9" fill="none" stroke="#8a8a8a" stroke-width="1.4"/></svg>
<svg class="r" style="left:1386px;top:486.5px;" width="15" height="14" viewBox="0 0 15 14"><path d="M0.75 0.75 H6 L8 2.75 H14.25 V13.25 H0.75 Z" fill="#f7f7f7" stroke="#8c8c8c" stroke-width="1.3"/><path d="M0.75 4 H14.25" stroke="#c8c8c8" stroke-width="1"/></svg>
<div class="t" style="left:1407.5px;top:487.84px;font-size:12px;line-height:12px;font-weight:400;color:#0a0a0a;font-style:normal;">JPG-Import</div>
<svg class="r" style="left:1369px;top:508.5px;" width="7" height="10" viewBox="0 0 7 10"><path d="M1 1 L5 5 L1 9" fill="none" stroke="#8a8a8a" stroke-width="1.4"/></svg>
<svg class="r" style="left:1386px;top:506.5px;" width="15" height="14" viewBox="0 0 15 14"><path d="M0.75 0.75 H6 L8 2.75 H14.25 V13.25 H0.75 Z" fill="#f7f7f7" stroke="#8c8c8c" stroke-width="1.3"/><path d="M0.75 4 H14.25" stroke="#c8c8c8" stroke-width="1"/></svg>
<div class="t" style="left:1407.5px;top:507.84px;font-size:12px;line-height:12px;font-weight:400;color:#0a0a0a;font-style:normal;">kml-Exporte</div>
<svg class="r" style="left:1369px;top:528.5px;" width="7" height="10" viewBox="0 0 7 10"><path d="M1 1 L5 5 L1 9" fill="none" stroke="#8a8a8a" stroke-width="1.4"/></svg>
<svg class="r" style="left:1386px;top:526.5px;" width="15" height="14" viewBox="0 0 15 14"><path d="M0.75 0.75 H6 L8 2.75 H14.25 V13.25 H0.75 Z" fill="#f7f7f7" stroke="#8c8c8c" stroke-width="1.3"/><path d="M0.75 4 H14.25" stroke="#c8c8c8" stroke-width="1"/></svg>
<div class="t" style="left:1407.5px;top:527.84px;font-size:12px;line-height:12px;font-weight:400;color:#0a0a0a;font-style:normal;">models</div>
<svg class="r" style="left:1369px;top:548.5px;" width="7" height="10" viewBox="0 0 7 10"><path d="M1 1 L5 5 L1 9" fill="none" stroke="#8a8a8a" stroke-width="1.4"/></svg>
<svg class="r" style="left:1386px;top:546.5px;" width="15" height="14" viewBox="0 0 15 14"><path d="M0.75 0.75 H6 L8 2.75 H14.25 V13.25 H0.75 Z" fill="#f7f7f7" stroke="#8c8c8c" stroke-width="1.3"/><path d="M0.75 4 H14.25" stroke="#c8c8c8" stroke-width="1"/></svg>
<div class="t" style="left:1407.5px;top:547.84px;font-size:12px;line-height:12px;font-weight:400;color:#0a0a0a;font-style:normal;">nicht georeferenzierte Karten, Scans</div>
<svg class="r" style="left:1369px;top:568.5px;" width="7" height="10" viewBox="0 0 7 10"><path d="M1 1 L5 5 L1 9" fill="none" stroke="#8a8a8a" stroke-width="1.4"/></svg>
<svg class="r" style="left:1386px;top:566.5px;" width="15" height="14" viewBox="0 0 15 14"><path d="M0.75 0.75 H6 L8 2.75 H14.25 V13.25 H0.75 Z" fill="#f7f7f7" stroke="#8c8c8c" stroke-width="1.3"/><path d="M0.75 4 H14.25" stroke="#c8c8c8" stroke-width="1"/></svg>
<div class="t" style="left:1407.5px;top:567.84px;font-size:12px;line-height:12px;font-weight:400;color:#0a0a0a;font-style:normal;">Offline-Karten</div>
<svg class="r" style="left:1369px;top:588.5px;" width="7" height="10" viewBox="0 0 7 10"><path d="M1 1 L5 5 L1 9" fill="none" stroke="#8a8a8a" stroke-width="1.4"/></svg>
<svg class="r" style="left:1386px;top:586.5px;" width="15" height="14" viewBox="0 0 15 14"><path d="M0.75 0.75 H6 L8 2.75 H14.25 V13.25 H0.75 Z" fill="#f7f7f7" stroke="#8c8c8c" stroke-width="1.3"/><path d="M0.75 4 H14.25" stroke="#c8c8c8" stroke-width="1"/></svg>
<div class="t" style="left:1407.5px;top:587.84px;font-size:12px;line-height:12px;font-weight:400;color:#0a0a0a;font-style:normal;">pdf</div>
<svg class="r" style="left:1369px;top:608.5px;" width="7" height="10" viewBox="0 0 7 10"><path d="M1 1 L5 5 L1 9" fill="none" stroke="#8a8a8a" stroke-width="1.4"/></svg>
<svg class="r" style="left:1386px;top:606.5px;" width="15" height="14" viewBox="0 0 15 14"><path d="M0.75 0.75 H6 L8 2.75 H14.25 V13.25 H0.75 Z" fill="#f7f7f7" stroke="#8c8c8c" stroke-width="1.3"/><path d="M0.75 4 H14.25" stroke="#c8c8c8" stroke-width="1"/></svg>
<div class="t" style="left:1407.5px;top:607.84px;font-size:12px;line-height:12px;font-weight:400;color:#0a0a0a;font-style:normal;">planlauf_terrain</div>
<svg class="r" style="left:1369px;top:628.5px;" width="7" height="10" viewBox="0 0 7 10"><path d="M1 1 L5 5 L1 9" fill="none" stroke="#8a8a8a" stroke-width="1.4"/></svg>
<svg class="r" style="left:1386px;top:626.5px;" width="15" height="14" viewBox="0 0 15 14"><path d="M0.75 0.75 H6 L8 2.75 H14.25 V13.25 H0.75 Z" fill="#f7f7f7" stroke="#8c8c8c" stroke-width="1.3"/><path d="M0.75 4 H14.25" stroke="#c8c8c8" stroke-width="1"/></svg>
<div class="t" style="left:1407.5px;top:627.84px;font-size:12px;line-height:12px;font-weight:400;color:#0a0a0a;font-style:normal;">plugins</div>
<svg class="r" style="left:1369px;top:648.5px;" width="7" height="10" viewBox="0 0 7 10"><path d="M1 1 L5 5 L1 9" fill="none" stroke="#8a8a8a" stroke-width="1.4"/></svg>
<svg class="r" style="left:1386px;top:646.5px;" width="15" height="14" viewBox="0 0 15 14"><path d="M0.75 0.75 H6 L8 2.75 H14.25 V13.25 H0.75 Z" fill="#f7f7f7" stroke="#8c8c8c" stroke-width="1.3"/><path d="M0.75 4 H14.25" stroke="#c8c8c8" stroke-width="1"/></svg>
<div class="t" style="left:1407.5px;top:647.84px;font-size:12px;line-height:12px;font-weight:400;color:#0a0a0a;font-style:normal;">Rechtliches</div>
<svg class="r" style="left:1366px;top:669.5px;" width="11" height="7" viewBox="0 0 11 7"><path d="M1 1 L5.5 5.5 L10 1" fill="none" stroke="#555" stroke-width="1.4"/></svg>
<svg class="r" style="left:1386px;top:666.0px;" width="15" height="15" viewBox="0 0 15 15"><path d="M0.75 1.25 H5 L7 3 H14.25 V14.25 H0.75 Z" fill="#f7f7f7" stroke="#8c8c8c" stroke-width="1.3"/><path d="M0.75 6 H6 L8 4.5 H14.25" fill="none" stroke="#8c8c8c" stroke-width="1.3"/><rect x="1" y="1" width="5" height="2" fill="#999"/></svg>
<div class="t" style="left:1407.5px;top:667.84px;font-size:12px;line-height:12px;font-weight:400;color:#0a0a0a;font-style:normal;">Shape-Exporte</div>
<svg class="r" style="left:1387px;top:689.5px;" width="11" height="7" viewBox="0 0 11 7"><path d="M1 1 L5.5 5.5 L10 1" fill="none" stroke="#555" stroke-width="1.4"/></svg>
<svg class="r" style="left:1406px;top:686.0px;" width="15" height="15" viewBox="0 0 15 15"><path d="M0.75 1.25 H5 L7 3 H14.25 V14.25 H0.75 Z" fill="#f7f7f7" stroke="#8c8c8c" stroke-width="1.3"/><path d="M0.75 6 H6 L8 4.5 H14.25" fill="none" stroke="#8c8c8c" stroke-width="1.3"/><rect x="1" y="1" width="5" height="2" fill="#999"/></svg>
<div class="t" style="left:1427.5px;top:687.84px;font-size:12px;line-height:12px;font-weight:400;color:#0a0a0a;font-style:normal;">WT</div>
<svg class="r" style="left:1410px;top:708.5px;" width="7" height="10" viewBox="0 0 7 10"><path d="M1 1 L5 5 L1 9" fill="none" stroke="#8a8a8a" stroke-width="1.4"/></svg>
<svg class="r" style="left:1428px;top:706.5px;" width="15" height="14" viewBox="0 0 15 14"><path d="M0.75 0.75 H6 L8 2.75 H14.25 V13.25 H0.75 Z" fill="#f7f7f7" stroke="#8c8c8c" stroke-width="1.3"/><path d="M0.75 4 H14.25" stroke="#c8c8c8" stroke-width="1"/></svg>
<div class="t" style="left:1449px;top:707.84px;font-size:12px;line-height:12px;font-weight:400;color:#0a0a0a;font-style:normal;">PflGes</div>
<svg class="r" style="left:1410px;top:728.5px;" width="7" height="10" viewBox="0 0 7 10"><path d="M1 1 L5 5 L1 9" fill="none" stroke="#8a8a8a" stroke-width="1.4"/></svg>
<svg class="r" style="left:1428px;top:726.5px;" width="15" height="14" viewBox="0 0 15 14"><path d="M0.75 0.75 H6 L8 2.75 H14.25 V13.25 H0.75 Z" fill="#f7f7f7" stroke="#8c8c8c" stroke-width="1.3"/><path d="M0.75 4 H14.25" stroke="#c8c8c8" stroke-width="1"/></svg>
<div class="t" style="left:1449px;top:727.84px;font-size:12px;line-height:12px;font-weight:400;color:#0a0a0a;font-style:normal;">PflGes_Fotos</div>
<svg class="r" style="left:1427px;top:746.5px;" width="17" height="14" viewBox="0 0 17 14"><path d="M1.5 3 Q5 0.5 8.5 3 Q12 1 15.5 3 V11 Q12 13.5 8.5 11 Q5 13 1.5 11 Z" fill="#dce6f2" stroke="#4a6fa5" stroke-width="1.4"/></svg>
<div class="t" style="left:1449px;top:747.84px;font-size:12px;line-height:12px;font-weight:400;color:#0a0a0a;font-style:normal;">Baumfrei.shp</div>
<svg class="r" style="left:1427px;top:766.5px;" width="17" height="14" viewBox="0 0 17 14"><path d="M1.5 3 Q5 0.5 8.5 3 Q12 1 15.5 3 V11 Q12 13.5 8.5 11 Q5 13 1.5 11 Z" fill="#dce6f2" stroke="#4a6fa5" stroke-width="1.4"/></svg>
<div class="t" style="left:1449px;top:767.84px;font-size:12px;line-height:12px;font-weight:400;color:#0a0a0a;font-style:normal;">Bodenarten.shp</div>
<svg class="r" style="left:1427px;top:786.5px;" width="17" height="14" viewBox="0 0 17 14"><path d="M1.5 3 Q5 0.5 8.5 3 Q12 1 15.5 3 V11 Q12 13.5 8.5 11 Q5 13 1.5 11 Z" fill="#dce6f2" stroke="#4a6fa5" stroke-width="1.4"/></svg>
<div class="t" style="left:1449px;top:787.84px;font-size:12px;line-height:12px;font-weight:400;color:#0a0a0a;font-style:normal;">fpc_punkte.shp</div>
<svg class="r" style="left:1427px;top:806.5px;" width="17" height="14" viewBox="0 0 17 14"><path d="M1.5 3 Q5 0.5 8.5 3 Q12 1 15.5 3 V11 Q12 13.5 8.5 11 Q5 13 1.5 11 Z" fill="#dce6f2" stroke="#4a6fa5" stroke-width="1.4"/></svg>
<div class="t" style="left:1449px;top:807.84px;font-size:12px;line-height:12px;font-weight:400;color:#0a0a0a;font-style:normal;">fpc_punkte_ETRS_89.shp</div>
</div>
<div class="r" style="left:1582px;top:223px;width:17px;height:592px;background:#f0f0f0;"></div>
<div class="r" style="left:1583px;top:314px;width:15px;height:125px;background:#cdcdcd;"></div>
<svg class="r" style="left:1586px;top:229px;" width="10" height="7" viewBox="0 0 10 7"><path d="M1 6 L5 2 L9 6" fill="none" stroke="#555" stroke-width="1.3"/></svg>
<svg class="r" style="left:1586px;top:801px;" width="10" height="7" viewBox="0 0 10 7"><path d="M1 1 L5 5 L9 1" fill="none" stroke="#555" stroke-width="1.3"/></svg>
<div class="r" style="left:1299px;top:815px;width:283px;height:16px;background:#f0f0f0;"></div>
<div class="r" style="left:1318px;top:816px;width:162px;height:14px;background:#cdcdcd;"></div>
<svg class="r" style="left:1301px;top:818px;" width="7" height="10" viewBox="0 0 7 10"><path d="M5.5 1 L1.5 5 L5.5 9" fill="none" stroke="#444" stroke-width="1.4"/></svg>
<svg class="r" style="left:1569px;top:818px;" width="7" height="10" viewBox="0 0 7 10"><path d="M1.5 1 L5.5 5 L1.5 9" fill="none" stroke="#444" stroke-width="1.4"/></svg>
<div class="r" style="left:1582px;top:815px;width:17px;height:16px;background:#f0f0f0;"></div>
<div class="r" style="left:43px;top:815px;width:242px;height:16px;background:#f0f0f0;"></div>
<div class="r" style="left:60px;top:816px;width:119px;height:14px;background:#cdcdcd;"></div>
<svg class="r" style="left:47px;top:818px;" width="7" height="10" viewBox="0 0 7 10"><path d="M5.5 1 L1.5 5 L5.5 9" fill="none" stroke="#444" stroke-width="1.4"/></svg>
<svg class="r" style="left:273px;top:818px;" width="7" height="10" viewBox="0 0 7 10"><path d="M1.5 1 L5.5 5 L1.5 9" fill="none" stroke="#444" stroke-width="1.4"/></svg>
<svg class="r" style="left:247px;top:180px;" width="14" height="14" viewBox="0 0 14 14"><rect x="1" y="5" width="8" height="8" fill="none" stroke="#111" stroke-width="1.6"/><path d="M4 5 V1.5 H12.5 V9 H9" fill="none" stroke="#111" stroke-width="1.6"/><rect x="4" y="1" width="9" height="2" fill="#111"/></svg>
<svg class="r" style="left:268px;top:180px;" width="14" height="14" viewBox="0 0 14 14"><path d="M1.5 1.5 L12.5 12.5 M12.5 1.5 L1.5 12.5" stroke="#111" stroke-width="2.4"/></svg>
<svg class="r" style="left:1561px;top:180px;" width="14" height="14" viewBox="0 0 14 14"><rect x="1" y="5" width="8" height="8" fill="none" stroke="#111" stroke-width="1.6"/><path d="M4 5 V1.5 H12.5 V9 H9" fill="none" stroke="#111" stroke-width="1.6"/><rect x="4" y="1" width="9" height="2" fill="#111"/></svg>
<svg class="r" style="left:1582px;top:180px;" width="14" height="14" viewBox="0 0 14 14"><path d="M1.5 1.5 L12.5 12.5 M12.5 1.5 L1.5 12.5" stroke="#111" stroke-width="2.4"/></svg>
<div class="r" style="left:928px;top:178px;width:427px;height:260px;background:#f0f0f0;border:1px solid #c8c8c8;box-sizing:border-box;box-shadow:1px 1px 4px rgba(0,0,0,0.22);"></div>
<div class="r" style="left:929px;top:179px;width:425px;height:31px;background:#fff;"></div>
<div class="t" style="left:937.3px;top:188.59px;font-size:12.3px;line-height:12.3px;font-weight:400;color:#a0a0a0;font-style:normal;">Messen</div>
<div class="r" style="left:1334px;top:186px;width:20px;height:20px;background:#e6e6e6;"></div>
<svg class="r" style="left:1340px;top:192px;" width="8" height="8" viewBox="0 0 8 8"><path d="M1 1 L7 7 M7 1 L1 7" stroke="#dadada" stroke-width="1"/></svg>
<div class="r" style="left:936px;top:217px;width:412px;height:114px;background:#fff;border:1px solid #a8a8a8;box-sizing:border-box;"></div>
<div class="t" style="right:258px;top:225.13px;font-size:12.6px;line-height:12.6px;font-weight:400;color:#111;font-style:normal;">Segmente [Meter]</div>
<div class="t" style="right:256.5px;top:246.17px;font-size:12.2px;line-height:12.2px;font-weight:400;color:#111;font-style:normal;">6,002</div>
<div class="t" style="left:937px;top:342.53px;font-size:10.6px;line-height:10.6px;font-weight:400;color:#222;font-style:normal;">Summe</div>
<div class="r" style="left:1051px;top:337.5px;width:193px;height:18.5px;background:#fff;border:1px solid #a8a8a8;box-sizing:border-box;"></div>
<div class="t" style="right:361px;top:341.68px;font-size:11.6px;line-height:11.6px;font-weight:700;color:#000;font-style:normal;">6,002 m</div>
<div class="r" style="left:1248px;top:337.5px;width:99px;height:18.5px;background:#e1e1e1;border:1px solid #d0d0d0;box-sizing:border-box;"></div>
<div class="t" style="left:1251px;top:342.53px;font-size:10.6px;line-height:10.6px;font-weight:400;color:#222;font-style:normal;">Meter</div>
<svg class="r" style="left:1331px;top:343px;" width="11" height="7" viewBox="0 0 11 7"><path d="M1 1 L5.5 5.5 L10 1" fill="none" stroke="#666" stroke-width="1.2"/></svg>
<svg class="r" style="left:936px;top:364px;" width="14" height="14" viewBox="0 0 14 14"><circle cx="7" cy="7" r="6.2" fill="#fff" stroke="#333" stroke-width="1.1"/></svg>
<div class="t" style="left:955.5px;top:366.20px;font-size:10.4px;line-height:10.4px;font-weight:400;color:#222;font-style:normal;">Kartesisch</div>
<svg class="r" style="left:1051px;top:364px;" width="14" height="14" viewBox="0 0 14 14"><circle cx="7" cy="7" r="6.2" fill="#fff" stroke="#333" stroke-width="1.1"/><circle cx="7" cy="7" r="3.6" fill="#333"/></svg>
<div class="t" style="left:1070.5px;top:366.20px;font-size:10.4px;line-height:10.4px;font-weight:400;color:#222;font-style:normal;">Ellipsoidal</div>
<svg class="r" style="left:940px;top:387px;" width="8" height="10" viewBox="0 0 8 10"><path d="M1 0.5 L7 5 L1 9.5 Z" fill="#222"/></svg>
<div class="t" style="left:955.4px;top:385.85px;font-size:11.4px;line-height:11.4px;font-weight:700;color:#111;font-style:normal;">Information</div>
<div class="r" style="left:937.8px;top:408.5px;width:75.20000000000005px;height:21px;background:#e1e1e1;border:1px solid #adadad;box-sizing:border-box;"></div>
<div class="t" style="left:937.8px;top:414.53px;width:75.20000000000005px;text-align:center;font-size:10.6px;line-height:10.6px;color:#222">Neu</div>
<div class="r" style="left:1021px;top:408.5px;width:75.59999999999991px;height:21px;background:#e1e1e1;border:1px solid #adadad;box-sizing:border-box;"></div>
<div class="t" style="left:1021px;top:414.53px;width:75.59999999999991px;text-align:center;font-size:10.6px;line-height:10.6px;color:#222">Konfiguration</div>
<div class="r" style="left:1104px;top:408.5px;width:76px;height:21px;background:#e1e1e1;border:1px solid #adadad;box-sizing:border-box;"></div>
<div class="t" style="left:1104px;top:414.53px;width:76px;text-align:center;font-size:10.6px;line-height:10.6px;color:#222">Alle kopieren</div>
<div class="r" style="left:1187.3px;top:408.5px;width:75.5px;height:21px;background:#e1e1e1;border:1px solid #adadad;box-sizing:border-box;"></div>
<div class="t" style="left:1187.3px;top:414.53px;width:75.5px;text-align:center;font-size:10.6px;line-height:10.6px;color:#222">Schließen</div>
<div class="r" style="left:1271px;top:408.5px;width:75.5px;height:21px;background:#e1e1e1;border:1px solid #adadad;box-sizing:border-box;"></div>
<div class="t" style="left:1271px;top:414.53px;width:75.5px;text-align:center;font-size:10.6px;line-height:10.6px;color:#222">Hilfe</div>
<div class="r" style="left:4px;top:836.5px;width:230px;height:18px;background:#fff;border:1px solid #a8a8a8;box-sizing:border-box;"></div>
<svg class="r" style="left:9px;top:839px;" width="12" height="12" viewBox="0 0 12 12"><circle cx="4.8" cy="4.8" r="3.6" fill="none" stroke="#888" stroke-width="1.3"/><path d="M7.4 7.4 L11 11" stroke="#888" stroke-width="1.5"/></svg>
<div class="t" style="left:27px;top:840.94px;font-size:10.7px;line-height:10.7px;font-weight:400;color:#8a8a8a;font-style:normal;">Zu suchender Typ (Strg+K)</div>
<div class="t" style="left:759px;top:841.11px;font-size:10.5px;line-height:10.5px;font-weight:400;color:#222;font-style:normal;">Koordinate</div>
<div class="r" style="left:812.5px;top:836.5px;width:121px;height:18px;background:#fff;border:1px solid #a8a8a8;box-sizing:border-box;"></div>
<div class="t" style="left:818px;top:841.11px;font-size:10.5px;line-height:10.5px;font-weight:400;color:#222;font-style:normal;">473671.81,5397371.61</div>
<div class="t" style="left:964.3px;top:841.11px;font-size:10.5px;line-height:10.5px;font-weight:400;color:#222;font-style:normal;">Maßstab</div>
<div class="r" style="left:1006.5px;top:836.5px;width:75.5px;height:18px;background:#fff;border:1px solid #a8a8a8;box-sizing:border-box;"></div>
<div class="t" style="left:1011px;top:841.11px;font-size:10.5px;line-height:10.5px;font-weight:400;color:#222;font-style:normal;">1:78</div>
<svg class="r" style="left:1067px;top:842px;" width="11" height="7" viewBox="0 0 11 7"><path d="M1 1 L5.5 5.5 L10 1" fill="none" stroke="#444" stroke-width="1.2"/></svg>
<div class="t" style="left:1112.5px;top:840.94px;font-size:10.7px;line-height:10.7px;font-weight:400;color:#222;font-style:normal;">Vergrößerung</div>
<div class="r" style="left:1181px;top:836.5px;width:71.5px;height:18px;background:#fff;border:1px solid #a8a8a8;box-sizing:border-box;"></div>
<div class="t" style="left:1184px;top:841.11px;font-size:10.5px;line-height:10.5px;font-weight:400;color:#222;font-style:normal;">100%</div>
<div class="t" style="left:1261px;top:841.11px;font-size:10.5px;line-height:10.5px;font-weight:400;color:#222;font-style:normal;">Drehung</div>
<div class="r" style="left:1308.4px;top:836.5px;width:69.6px;height:18px;background:#fff;border:1px solid #a8a8a8;box-sizing:border-box;"></div>
<div class="t" style="left:1311px;top:841.11px;font-size:10.5px;line-height:10.5px;font-weight:400;color:#222;font-style:normal;">0,0 °</div>
<svg class="r" style="left:1238px;top:838px;" width="12" height="15" viewBox="0 0 12 15"><path d="M2 6 L6 2 L10 6 Z M2 9 L6 13 L10 9 Z" fill="#333"/></svg>
<svg class="r" style="left:1365px;top:838px;" width="12" height="15" viewBox="0 0 12 15"><path d="M2 6 L6 2 L10 6 Z M2 9 L6 13 L10 9 Z" fill="#333"/></svg>
<svg class="r" style="left:1384px;top:838.5px;" width="14" height="14" viewBox="0 0 14 14"><rect x="0.75" y="0.75" width="12.5" height="12.5" fill="#fff" stroke="#333" stroke-width="1.2"/><path d="M3 7 L5.8 9.8 L11 3.8" fill="none" stroke="#222" stroke-width="1.3"/></svg>
<div class="t" style="left:1402.5px;top:841.28px;font-size:10.3px;line-height:10.3px;font-weight:400;color:#222;font-style:normal;">Zeichnen</div>
<svg class="r" style="left:1459px;top:838px;" width="16" height="15" viewBox="0 0 16 15"><ellipse cx="8" cy="7.5" rx="7" ry="6.5" fill="none" stroke="#444" stroke-width="1.2"/><path d="M1 7.5 H15 M8 1 V14 M2.5 4 H13.5 M2.5 11 H13.5" stroke="#444" stroke-width="1"/><ellipse cx="8" cy="7.5" rx="3" ry="6.5" fill="none" stroke="#444" stroke-width="1"/></svg>
<div class="t" style="left:1479px;top:841.45px;font-size:10.1px;line-height:10.1px;font-weight:400;color:#222;font-style:normal;">EPSG:25832</div>
<svg class="r" style="left:1551px;top:837px;" width="18" height="17" viewBox="0 0 18 17"><path d="M2 2 H16 V11 H8 L4 15 V11 H2 Z" fill="#555" stroke="#555" stroke-linejoin="round" stroke-width="2"/><circle cx="5.5" cy="6.5" r="1.2" fill="#fff"/><circle cx="9" cy="6.5" r="1.2" fill="#fff"/><circle cx="12.5" cy="6.5" r="1.2" fill="#fff"/></svg>
<svg class="r" style="left:1579px;top:837px;" width="17" height="17" viewBox="0 0 17 17"><path d="M3 8 L8 3 L14 6 L12 14 L4 14 Z" fill="#ddd" stroke="#777" stroke-width="1.2"/><path d="M1 1 L7 7" stroke="#777" stroke-width="1.5"/></svg>
<svg class="r" style="left:940px;top:837px;" width="14" height="16" viewBox="0 0 14 16"><ellipse cx="7" cy="9" rx="5" ry="6" fill="#fff" stroke="#222" stroke-width="1.6"/><path d="M3 4 L10 13 M11 3 L4 12" stroke="#222" stroke-width="1.8"/><circle cx="7" cy="11" r="1.5" fill="#222"/></svg>
<svg class="r" style="left:1090px;top:836px;" width="16" height="19" viewBox="0 0 16 19"><path d="M4 8 V5 A4 4 0 0 1 12 5 V8" fill="none" stroke="#666" stroke-width="2"/><rect x="2" y="8" width="12" height="10" rx="1" fill="#666"/></svg>
<div class="r" style="left:4px;top:50px;width:2px;height:20px;background-image:repeating-linear-gradient(#b4b4b4 0 1px, transparent 1px 3px)"></div>
<svg class="r" style="left:12.8px;top:50.0px;" width="20" height="20" viewBox="0 0 20 20"><path d="M4 1.5 H12 L16 5.5 V18.5 H4 Z" fill="#fff" stroke="#8a8a8a" stroke-width="1.2"/><path d="M12 1.5 V5.5 H16" fill="none" stroke="#8a8a8a"/></svg>
<svg class="r" style="left:38.8px;top:50.0px;" width="20" height="20" viewBox="0 0 20 20"><path d="M1 4 H7 L9 6 H18 V17 H1 Z" fill="#e3bd3a"/><path d="M2.5 9 H19.5 L18 17 H1 Z" fill="#f5d74f"/></svg>
<svg class="r" style="left:64.4px;top:50.0px;" width="20" height="20" viewBox="0 0 20 20"><rect x="2" y="2" width="16" height="16" rx="1.5" fill="#4f7fbf"/><rect x="5" y="3" width="10" height="6" fill="#dfe8f3"/><path d="M6 5 H14 M6 7 H14" stroke="#8aa6cc"/><rect x="5" y="12" width="10" height="5" fill="#fff"/><rect x="6" y="13" width="2" height="3" fill="#333"/></svg>
<svg class="r" style="left:90.5px;top:50.0px;" width="20" height="20" viewBox="0 0 20 20"><path d="M2 2 H12 L16 6 V17 H2 Z" fill="#fbf3c8" stroke="#c8a830" stroke-width="1.2"/><path d="M4 4 H8 V17 H4 Z" fill="#e8c840"/><rect x="12" y="12" width="8" height="8" rx="1" fill="#e2c230"/><path d="M16 13.5 V18.5 M13.8 14.5 L18.2 17.5 M18.2 14.5 L13.8 17.5" stroke="#fff" stroke-width="1.2"/></svg>
<svg class="r" style="left:116.3px;top:50.0px;" width="20" height="20" viewBox="0 0 20 20"><path d="M2 3 H14 L18 7 V17 H2 Z" fill="#fafafa" stroke="#999" stroke-width="1.2"/><path d="M8 9 L15 17" stroke="#c8a840" stroke-width="3"/><circle cx="7.5" cy="8" r="2.6" fill="none" stroke="#666" stroke-width="1.6"/></svg>
<svg class="r" style="left:141.5px;top:50.0px;" width="20" height="20" viewBox="0 0 20 20"><circle cx="6" cy="5.5" r="3.5" fill="#e05a3a"/><path d="M11 9 L17 2.5" stroke="#4a78c0" stroke-width="2.5"/><rect x="2.5" y="11" width="6.5" height="6.5" fill="#5aa05a"/><text x="11" y="18" font-size="10" font-family="Liberation Sans" fill="#333">a</text></svg>
<div class="r" style="left:166px;top:47px;width:1px;height:24px;background:#c8c8c8;"></div>
<div class="r" style="left:171px;top:50px;width:2px;height:20px;background-image:repeating-linear-gradient(#b4b4b4 0 1px, transparent 1px 3px)"></div>
<div class="r" style="left:731px;top:47.75px;width:37px;height:23.75px;background:#cce4f7;border:1px solid #99c9ef;box-sizing:border-box;"></div>
<div class="r" style="left:770px;top:47.75px;width:25px;height:23.75px;background:#cce4f7;border:1px solid #99c9ef;box-sizing:border-box;"></div>
<svg class="r" style="left:179.8px;top:50.0px;" width="20" height="20" viewBox="0 0 20 20"><path d="M6.5 18.5 L2.8 11.5 Q2.3 9.3 4.5 9.8 L6.3 12 V4.2 Q6.3 2.8 7.6 2.9 Q8.7 3 8.7 4.4 V9 V2.5 Q8.9 1.2 10.1 1.3 Q11.2 1.5 11.2 2.8 V9 V3.4 Q11.5 2.2 12.7 2.4 Q13.7 2.7 13.7 3.8 V9.5 V5.4 Q14 4.3 15 4.4 Q16.2 4.7 16.2 5.8 V12.5 Q16 16.5 14 18.5 Z" fill="#fff" stroke="#222" stroke-width="1.2"/></svg>
<svg class="r" style="left:204.8px;top:50.0px;" width="20" height="20" viewBox="0 0 20 20"><rect x="1" y="2" width="7" height="7" fill="#f0e030"/><rect x="7" y="7" width="6" height="6" fill="#f0e030"/><path d="M10 1 L13.5 5 H6.5 Z M10 19 L13.5 15 H6.5 Z M1 10 L5 6.5 V13.5 Z M19 10 L15 6.5 V13.5 Z" fill="#4a7cc0"/><path d="M10 5 V15 M5 10 H15" stroke="#4a7cc0" stroke-width="2"/><rect x="8" y="8" width="4" height="4" fill="#f0e030"/></svg>
<svg class="r" style="left:230.3px;top:50.0px;" width="20" height="20" viewBox="0 0 20 20"><circle cx="12" cy="8" r="6" fill="#fff" fill-opacity="0.6" stroke="#333" stroke-width="1.4"/><path d="M7.8 12.2 L2 18" stroke="#222" stroke-width="2.4"/><path d="M6.2 13.8 L2.6 17.4" stroke="#e0c040" stroke-width="1.8"/><path d="M12 4.8 V11.2 M8.8 8 H15.2" stroke="#3a6fb5" stroke-width="2.2"/></svg>
<svg class="r" style="left:256.0px;top:50.0px;" width="20" height="20" viewBox="0 0 20 20"><circle cx="12" cy="8" r="6" fill="#fff" fill-opacity="0.6" stroke="#333" stroke-width="1.4"/><path d="M7.8 12.2 L2 18" stroke="#222" stroke-width="2.4"/><path d="M6.2 13.8 L2.6 17.4" stroke="#e0c040" stroke-width="1.8"/><path d="M8.8 8 H15.2" stroke="#3a6fb5" stroke-width="2.2"/></svg>
<svg class="r" style="left:282.8px;top:50.0px;" width="20" height="20" viewBox="0 0 20 20"><path d="M1 1 H7 V7 H1 Z M13 1 H19 V7 H13 Z M13 13 H19 V19 H13 Z" fill="#4a7cc0"/><path d="M7 7 L10 10 M13 7 L10 10 M13 13 L10 10" stroke="#4a7cc0" stroke-width="1.5"/><circle cx="12" cy="8" r="6" fill="#fff" fill-opacity="0.6" stroke="#333" stroke-width="1.4"/><path d="M7.8 12.2 L2 18" stroke="#222" stroke-width="2.4"/><path d="M6.2 13.8 L2.6 17.4" stroke="#e0c040" stroke-width="1.8"/></svg>
<svg class="r" style="left:308.8px;top:50.0px;" width="20" height="20" viewBox="0 0 20 20"><rect x="2" y="2" width="8" height="11" fill="#f0e030"/><circle cx="12" cy="8" r="6" fill="#fff" fill-opacity="0.6" stroke="#333" stroke-width="1.4"/><path d="M7.8 12.2 L2 18" stroke="#222" stroke-width="2.4"/><path d="M6.2 13.8 L2.6 17.4" stroke="#e0c040" stroke-width="1.8"/></svg>
<svg class="r" style="left:334.0px;top:50.0px;" width="20" height="20" viewBox="0 0 20 20"><rect x="2" y="3" width="7" height="10" fill="#fff" stroke="#888"/><circle cx="12" cy="8" r="6" fill="#fff" fill-opacity="0.6" stroke="#333" stroke-width="1.4"/><path d="M7.8 12.2 L2 18" stroke="#222" stroke-width="2.4"/><path d="M6.2 13.8 L2.6 17.4" stroke="#e0c040" stroke-width="1.8"/></svg>
<svg class="r" style="left:359.5px;top:50.0px;" width="20" height="20" viewBox="0 0 20 20"><circle cx="12" cy="8" r="6" fill="none" stroke="#cfcfcf" stroke-width="1.4"/><path d="M7.8 12.2 L2 18" stroke="#cfcfcf" stroke-width="2.4"/><text x="12" y="11" text-anchor="middle" font-size="7" fill="#cfcfcf" font-family="Liberation Sans">1:1</text></svg>
<svg class="r" style="left:385.8px;top:50.0px;" width="20" height="20" viewBox="0 0 20 20"><circle cx="12" cy="8" r="6" fill="#fff" fill-opacity="0.6" stroke="#333" stroke-width="1.4"/><path d="M7.8 12.2 L2 18" stroke="#222" stroke-width="2.4"/><path d="M6.2 13.8 L2.6 17.4" stroke="#e0c040" stroke-width="1.8"/><rect x="11" y="11" width="8" height="8" fill="#5b84c0"/><path d="M17 12.5 L13 15 L17 17.5" fill="none" stroke="#fff" stroke-width="1.5"/></svg>
<svg class="r" style="left:412.0px;top:50.0px;" width="20" height="20" viewBox="0 0 20 20"><circle cx="11" cy="8" r="6" fill="none" stroke="#cfcfcf" stroke-width="1.4"/><path d="M6.8 12.2 L2 18" stroke="#cfcfcf" stroke-width="2.4"/><rect x="11" y="11" width="8" height="8" fill="none" stroke="#cfcfcf"/></svg>
<svg class="r" style="left:438.1px;top:50.0px;" width="20" height="20" viewBox="0 0 20 20"><path d="M2 2 H15 V17 H2 Z" fill="#f2f2f2" stroke="#a8a8a8" stroke-width="1.2"/><path d="M4 2 V17" stroke="#c8c8c8"/><rect x="12" y="12" width="8" height="8" rx="1" fill="#e2c230"/><path d="M16 13.5 V18.5 M13.8 14.5 L18.2 17.5 M18.2 14.5 L13.8 17.5" stroke="#fff" stroke-width="1.2"/></svg>
<svg class="r" style="left:463.8px;top:50.0px;" width="20" height="20" viewBox="0 0 20 20"><path d="M2 8 L6 4 H17 L18 11 L14 14 H3 Z" fill="#e4e4e4" stroke="#a8a8a8" stroke-width="1.2"/><rect x="12" y="12" width="8" height="8" rx="1" fill="#e2c230"/><path d="M16 13.5 V18.5 M13.8 14.5 L18.2 17.5 M18.2 14.5 L13.8 17.5" stroke="#fff" stroke-width="1.2"/></svg>
<svg class="r" style="left:491.4px;top:50.0px;" width="20" height="20" viewBox="0 0 20 20"><path d="M5 1 H12 V17 L8.5 13 L5 17 Z" fill="#6a9ad0" stroke="#34568a"/><rect x="12" y="12" width="8" height="8" rx="1" fill="#e2c230"/><path d="M16 13.5 V18.5 M13.8 14.5 L18.2 17.5 M18.2 14.5 L13.8 17.5" stroke="#fff" stroke-width="1.2"/></svg>
<svg class="r" style="left:514.5px;top:50.0px;" width="20" height="20" viewBox="0 0 20 20"><rect x="3" y="2" width="14" height="16" fill="#eee" stroke="#a8a8a8" stroke-width="1.2"/><path d="M10 1 H14 V9 L12 7 L10 9 Z" fill="#6a9ad0" stroke="#34568a" stroke-width="0.8"/></svg>
<svg class="r" style="left:540.5px;top:50.0px;" width="20" height="20" viewBox="0 0 20 20"><circle cx="10" cy="10" r="8.3" fill="#fff" stroke="#777" stroke-width="1.4"/><path d="M10 3.5 V10 L14 13" fill="none" stroke="#777" stroke-width="1.4"/></svg>
<svg class="r" style="left:566.5px;top:50.0px;" width="20" height="20" viewBox="0 0 20 20"><path d="M3.5 9.5 A6.5 6.5 0 0 1 15 5.5" fill="none" stroke="#3f7fc8" stroke-width="3.4"/><path d="M16.5 2 V8.5 H10 Z" fill="#3f7fc8"/><path d="M16.5 10.5 A6.5 6.5 0 0 1 5 14.5" fill="none" stroke="#5f9fe0" stroke-width="3.4"/><path d="M3.5 18 V11.5 H10 Z" fill="#5f9fe0"/></svg>
<svg class="r" style="left:604.0px;top:50.0px;" width="20" height="20" viewBox="0 0 20 20"><circle cx="8" cy="8" r="7" fill="#5b87c4"/><text x="8" y="12.5" text-anchor="middle" font-size="11" font-weight="700" font-style="italic" fill="#fff" font-family="Liberation Serif">i</text><path d="M11 10 L11 19 L13.5 16.5 L15.5 20 L17 19 L15 15.5 L18.5 15.5 Z" fill="#fff" stroke="#444" stroke-width="0.9"/></svg>
<svg class="r" style="left:630.0px;top:50.0px;" width="20" height="20" viewBox="0 0 20 20"><rect x="2" y="3" width="16" height="14" fill="#eef3fa" stroke="#5a82b8" stroke-width="1.3"/><path d="M2 6.5 H18" stroke="#5a82b8" stroke-width="2"/><path d="M2 10 H18 M2 13.5 H18 M7 6.5 V17" stroke="#5a82b8"/></svg>
<svg class="r" style="left:655.5px;top:50.0px;" width="20" height="20" viewBox="0 0 20 20"><rect x="2" y="2" width="16" height="16" fill="none" stroke="#666" stroke-width="1.2"/><circle cx="6" cy="5.5" r="1.6" fill="none" stroke="#d04040"/><circle cx="13" cy="5.5" r="1.6" fill="none" stroke="#d04040"/><circle cx="6" cy="10" r="1.6" fill="none" stroke="#40a040"/><circle cx="10" cy="10" r="1.6" fill="none" stroke="#40a040"/><circle cx="6" cy="14.5" r="1.6" fill="none" stroke="#4060c0"/><circle cx="10" cy="14.5" r="1.6" fill="none" stroke="#4060c0"/><circle cx="14" cy="14.5" r="1.6" fill="none" stroke="#4060c0"/><path d="M2 18 H18" stroke="#555" stroke-width="2"/></svg>
<svg class="r" style="left:681.5px;top:50.0px;" width="20" height="20" viewBox="0 0 20 20"><circle cx="10" cy="10" r="5.5" fill="#5b87c4"/><circle cx="10" cy="10" r="2.2" fill="#f0f0f0"/><path d="M10 1 V19 M1 10 H19 M3.6 3.6 L16.4 16.4 M16.4 3.6 L3.6 16.4" stroke="#5b87c4" stroke-width="3"/><circle cx="10" cy="10" r="2.2" fill="#f0f0f0"/></svg>
<svg class="r" style="left:707.0px;top:50.0px;" width="20" height="20" viewBox="0 0 20 20"><path d="M15.5 3 H4 L10 10 L4 17 H15.5" fill="none" stroke="#9a28b8" stroke-width="3"/></svg>
<svg class="r" style="left:734.0px;top:50.0px;" width="20" height="20" viewBox="0 0 20 20"><path d="M2 5.5 H18" stroke="#34568a" stroke-width="1.8"/><path d="M2 3.5 V7.5 M18 3.5 V7.5" stroke="#34568a" stroke-width="1"/><rect x="2" y="9" width="16" height="7.5" fill="#e8e8e8" stroke="#555" stroke-width="1.3"/><path d="M4.5 9 V12.5 M7 9 V12.5 M9.5 9 V12.5 M12 9 V12.5 M14.5 9 V12.5" stroke="#555" stroke-width="0.9"/></svg>
<svg class="r" style="left:772.0px;top:50.0px;" width="20" height="20" viewBox="0 0 20 20"><path d="M2 3 H18 V13 H9 L5 17 V13 H2 Z" fill="#f5e35a" stroke="#c8b030" stroke-width="1"/><circle cx="4" cy="17" r="2.5" fill="#6a8a4a"/></svg>
<svg class="r" style="left:796.2px;top:50.0px;" width="20" height="20" viewBox="0 0 20 20"><circle cx="10" cy="10" r="5.5" fill="none" stroke="#cfcfcf" stroke-width="2"/><path d="M10 1 V5 M10 15 V19 M1 10 H5 M15 10 H19 M3.6 3.6 L6 6 M14 14 L16.4 16.4 M16.4 3.6 L14 6 M6 14 L3.6 16.4" stroke="#cfcfcf" stroke-width="2.4"/></svg>
<svg class="r" style="left:835.5px;top:50.0px;" width="20" height="20" viewBox="0 0 20 20"><path d="M2 1.5 H18 V13.5 H7 L3.5 17.5 V13.5 H2 Z" fill="#fff" stroke="#666" stroke-width="1"/><text x="10" y="12" text-anchor="middle" font-family="Liberation Serif" font-size="12.5" fill="#222">T</text></svg>
<div class="r" style="left:591px;top:47px;width:1px;height:24px;background:#c8c8c8;"></div>
<div class="r" style="left:596px;top:50px;width:2px;height:20px;background-image:repeating-linear-gradient(#b4b4b4 0 1px, transparent 1px 3px)"></div>
<svg class="r" style="left:759px;top:58px;" width="8" height="5" viewBox="0 0 8 5"><path d="M0 0 H8 L4 4.5 Z" fill="#111"/></svg>
<svg class="r" style="left:824px;top:58px;" width="8" height="5" viewBox="0 0 8 5"><path d="M0 0 H8 L4 4.5 Z" fill="#999"/></svg>
<svg class="r" style="left:861px;top:58px;" width="8" height="5" viewBox="0 0 8 5"><path d="M0 0 H8 L4 4.5 Z" fill="#111"/></svg>
<div class="r" style="left:4px;top:78px;width:2px;height:20px;background-image:repeating-linear-gradient(#b4b4b4 0 1px, transparent 1px 3px)"></div>
<svg class="r" style="left:12.8px;top:77.5px;" width="20" height="20" viewBox="0 0 20 20"><rect x="2" y="6" width="9" height="11" fill="#e06030" transform="rotate(-18 6.5 11.5)"/><rect x="4" y="5" width="9" height="11" fill="#f0c030" transform="rotate(-8 8.5 10.5)"/><rect x="7" y="2" width="10" height="11" fill="#4a7cc0" transform="rotate(8 12 7.5)"/><rect x="12" y="12" width="8" height="8" rx="1" fill="#3f8f4f"/><path d="M16 13.5 V18.5 M13.5 16 H18.5" stroke="#fff" stroke-width="1.8"/></svg>
<svg class="r" style="left:38.4px;top:77.5px;" width="20" height="20" viewBox="0 0 20 20"><path d="M1 9 L5 6 H16 L19 9 V17 H1 Z" fill="#e3bd3a" stroke="#8a7020" stroke-width="0.8"/><path d="M1 9 H13 V17 H1 Z" fill="#f5d74f" stroke="#8a7020" stroke-width="0.8"/><circle cx="10" cy="6" r="4.5" fill="#3f6fb0"/><circle cx="9" cy="5" r="2" fill="#9fc0e8"/><rect x="12" y="12" width="8" height="8" rx="1" fill="#e2c230"/><path d="M16 13.5 V18.5 M13.8 14.5 L18.2 17.5 M18.2 14.5 L13.8 17.5" stroke="#fff" stroke-width="1.2"/></svg>
<svg class="r" style="left:64.0px;top:77.5px;" width="20" height="20" viewBox="0 0 20 20"><path d="M2.5 3 L8 16 L13 3.5 L17 3.5" fill="none" stroke="#333" stroke-width="1.4"/><circle cx="2.5" cy="3" r="1.5" fill="#fff" stroke="#333"/><circle cx="8" cy="16" r="1.5" fill="#fff" stroke="#333"/><circle cx="13" cy="3.5" r="1.5" fill="#fff" stroke="#333"/><circle cx="17" cy="3.5" r="1.5" fill="#fff" stroke="#333"/><rect x="12" y="12" width="8" height="8" rx="1" fill="#e2c230"/><path d="M16 13.5 V18.5 M13.8 14.5 L18.2 17.5 M18.2 14.5 L13.8 17.5" stroke="#fff" stroke-width="1.2"/></svg>
<svg class="r" style="left:90.0px;top:77.5px;" width="20" height="20" viewBox="0 0 20 20"><path d="M2 18 Q4 8 17 2 Q14 12 4 16 Z" fill="#6f9ad8" stroke="#34568a" stroke-width="1"/><path d="M2 18 L12 7" stroke="#34568a" stroke-width="0.8"/><rect x="12" y="12" width="8" height="8" rx="1" fill="#e2c230"/><path d="M16 13.5 V18.5 M13.8 14.5 L18.2 17.5 M18.2 14.5 L13.8 17.5" stroke="#fff" stroke-width="1.2"/></svg>
<svg class="r" style="left:116.8px;top:77.5px;" width="20" height="20" viewBox="0 0 20 20"><rect x="2" y="5" width="15" height="9" rx="1" fill="#5b87c4" stroke="#34568a"/><path d="M5 2 V5 M8 2 V5 M11 2 V5 M14 2 V5 M5 14 V17 M8 14 V17 M11 14 V17" stroke="#333" stroke-width="1"/><rect x="12" y="12" width="8" height="8" rx="1" fill="#e2c230"/><path d="M16 13.5 V18.5 M13.8 14.5 L18.2 17.5 M18.2 14.5 L13.8 17.5" stroke="#fff" stroke-width="1.2"/></svg>
<svg class="r" style="left:147.8px;top:77.5px;" width="20" height="20" viewBox="0 0 20 20"><rect x="1.5" y="1.5" width="16" height="16" rx="1.5" fill="#c8d6ea" stroke="#5a7aa8" stroke-width="1.2"/><path d="M4.5 4 L9 14 L13 4 H16" fill="none" stroke="#34568a" stroke-width="1.3"/><rect x="12" y="12" width="8" height="8" rx="1" fill="#e2c230"/><path d="M16 13.5 V18.5 M13.8 14.5 L18.2 17.5 M18.2 14.5 L13.8 17.5" stroke="#fff" stroke-width="1.2"/></svg>
<div class="r" style="left:141px;top:75px;width:1px;height:25px;background:#c8c8c8;"></div>
<div class="r" style="left:177.5px;top:75px;width:1px;height:25px;background:#c8c8c8;"></div>
<div class="r" style="left:182.5px;top:78px;width:2px;height:20px;background-image:repeating-linear-gradient(#b4b4b4 0 1px, transparent 1px 3px)"></div>
<svg class="r" style="left:191.6px;top:77.5px;" width="20" height="20" viewBox="0 0 20 20"><path d="M3 17 L13 3 L16 5 L6 19 Z" fill="#ddd" stroke="#cfcfcf"/><path d="M1 15 L9 4" stroke="#cfcfcf" stroke-width="2"/></svg>
<svg class="r" style="left:216.0px;top:77.5px;" width="20" height="20" viewBox="0 0 20 20"><path d="M4 19 L6 13 L15 2 L18 4.5 L9 15.5 Z" fill="#f0d030" stroke="#8a7a30" stroke-width="1"/><path d="M4 19 L6 13 L9 15.5 Z" fill="#e8d8b0"/><path d="M4 19 L5 16.5 L6.5 17.5 Z" fill="#333"/></svg>
<svg class="r" style="left:241.5px;top:77.5px;" width="20" height="20" viewBox="0 0 20 20"><rect x="2" y="2" width="16" height="16" rx="1.5" fill="#e6e6e6" stroke="#cfcfcf" stroke-width="1.5"/><rect x="5" y="12" width="10" height="5" fill="none" stroke="#cfcfcf"/></svg>
<svg class="r" style="left:268.5px;top:77.5px;" width="20" height="20" viewBox="0 0 20 20"><path d="M2 7 Q3 2 9 3 Q16 2 17 6 Q17 10 12 11 L10 15 Q6 16 3 12 Z" fill="#e6e6e6" stroke="#cfcfcf" stroke-width="1.5"/><rect x="12" y="12" width="8" height="8" rx="1" fill="#dedede"/><path d="M16 13.5 V18.5 M13.8 14.5 L18.2 17.5 M18.2 14.5 L13.8 17.5" stroke="#fff" stroke-width="1.2"/></svg>
<svg class="r" style="left:294.1px;top:77.5px;" width="20" height="20" viewBox="0 0 20 20"><path d="M3 5 L8 18 L12 10 L18 14" fill="none" stroke="#cfcfcf" stroke-width="1.6"/><rect x="2" y="2" width="5" height="5" fill="#e6e6e6" stroke="#cfcfcf"/></svg>
<svg class="r" style="left:332.2px;top:77.5px;" width="20" height="20" viewBox="0 0 20 20"><rect x="2" y="2" width="16" height="16" fill="#e6e6e6" stroke="#cfcfcf" stroke-width="1.2"/><path d="M2 7 H18 M2 11 H18 M2 15 H18" stroke="#cfcfcf"/><path d="M10 17 L18 5" stroke="#c4c4c4" stroke-width="2"/></svg>
<svg class="r" style="left:357.5px;top:77.5px;" width="20" height="20" viewBox="0 0 20 20"><rect x="4" y="5" width="12" height="14" fill="#e6e6e6" stroke="#cfcfcf" stroke-width="1.4"/><path d="M2 4 H18 M8 2 H12 M8 8 V16 M12 8 V16" stroke="#cfcfcf" stroke-width="1.4"/></svg>
<svg class="r" style="left:384.4px;top:77.5px;" width="20" height="20" viewBox="0 0 20 20"><circle cx="5" cy="15" r="3" fill="none" stroke="#cfcfcf" stroke-width="1.5"/><circle cx="15" cy="15" r="3" fill="none" stroke="#cfcfcf" stroke-width="1.5"/><path d="M6.5 12.5 L15 2 M13.5 12.5 L5 2" stroke="#cfcfcf" stroke-width="1.5"/></svg>
<svg class="r" style="left:410.0px;top:77.5px;" width="20" height="20" viewBox="0 0 20 20"><rect x="2" y="5" width="10" height="13" fill="#ececec" stroke="#cfcfcf" stroke-width="1.2"/><rect x="7" y="2" width="10" height="13" fill="#ececec" stroke="#cfcfcf" stroke-width="1.2"/></svg>
<svg class="r" style="left:435.8px;top:77.5px;" width="20" height="20" viewBox="0 0 20 20"><rect x="3" y="3" width="14" height="16" fill="#ececec" stroke="#cfcfcf" stroke-width="1.2"/><rect x="7" y="1.5" width="6" height="3" fill="#ddd" stroke="#cfcfcf"/><rect x="8" y="7" width="7" height="10" fill="#f4f4f4" stroke="#cfcfcf"/></svg>
<svg class="r" style="left:461.9px;top:77.5px;" width="20" height="20" viewBox="0 0 20 20"><path d="M7 3 L2 8 L7 13 V10 Q13 10 15 17 Q17 7 7 6 Z" fill="#d8d8d8" stroke="#cfcfcf"/></svg>
<svg class="r" style="left:487.0px;top:77.5px;" width="20" height="20" viewBox="0 0 20 20"><path d="M13 3 L18 8 L13 13 V10 Q7 10 5 17 Q3 7 13 6 Z" fill="#d8d8d8" stroke="#cfcfcf"/></svg>
<svg class="r" style="left:524.3px;top:77.5px;" width="20" height="20" viewBox="0 0 20 20"><path d="M1 10 L5 5 H19 V15 H5 Z" fill="#f5e35a" stroke="#c8b030" stroke-width="0.8"/><text x="12" y="13" text-anchor="middle" font-size="8" font-weight="700" font-family="Liberation Sans" fill="#333">abc</text></svg>
<svg class="r" style="left:550.6px;top:77.5px;" width="20" height="20" viewBox="0 0 20 20"><circle cx="8" cy="8" r="6.5" fill="#d03030"/><path d="M8 8 V1.5 A6.5 6.5 0 0 0 1.5 8 Z" fill="#40a040"/><path d="M8 8 H1.5 A6.5 6.5 0 0 0 8 14.5 Z" fill="#f0d030"/><rect x="9" y="11" width="3" height="8" fill="#40a040"/><rect x="12" y="14" width="3" height="5" fill="#d03030"/><rect x="6" y="15" width="3" height="4" fill="#f0d030"/></svg>
<svg class="r" style="left:582.8px;top:77.5px;" width="20" height="20" viewBox="0 0 20 20"><path d="M1 9 L5 4 H17 V14 H5 Z" fill="#dfe8f6" stroke="#5a82b8" stroke-width="1"/><text x="10" y="12" text-anchor="middle" font-size="8" font-weight="700" font-family="Liberation Sans" fill="#333">ab</text><circle cx="14.5" cy="15.5" r="3.5" fill="#c02020"/></svg>
<svg class="r" style="left:607.0px;top:77.5px;" width="20" height="20" viewBox="0 0 20 20"><path d="M1 10 L5 5 H19 V15 H5 Z" fill="#fff" stroke="#d02020" stroke-width="1.2"/><text x="12" y="13" text-anchor="middle" font-size="8" font-weight="700" font-family="Liberation Sans" fill="#d02020">abc</text></svg>
<svg class="r" style="left:640.0px;top:77.5px;" width="20" height="20" viewBox="0 0 20 20"><path d="M1 9 L5 4 H17 V14 H5 Z" fill="#f5e35a" stroke="#c8b030" stroke-width="0.8"/><text x="10" y="12" text-anchor="middle" font-size="8" font-weight="700" font-family="Liberation Sans" fill="#333">ab</text><circle cx="14.5" cy="15.5" r="3.5" fill="#c02020"/></svg>
<svg class="r" style="left:665.6px;top:77.5px;" width="20" height="20" viewBox="0 0 20 20"><path d="M1 8 L5 3 H19 V13 H5 Z" fill="#f5e35a" stroke="#c8b030" stroke-width="0.8"/><text x="12" y="11" text-anchor="middle" font-size="8" font-weight="700" font-family="Liberation Sans" fill="#333">abc</text><path d="M6 17 Q12 11 18 17 Q12 21 6 17 Z" fill="#fff" stroke="#34568a"/><circle cx="12" cy="16.5" r="2" fill="#34568a"/></svg>
<svg class="r" style="left:692.0px;top:77.5px;" width="20" height="20" viewBox="0 0 20 20"><path d="M1 8 L5 3 H19 V13 H5 Z" fill="#f5e35a" stroke="#c8b030" stroke-width="0.8"/><text x="12" y="11" text-anchor="middle" font-size="8" font-weight="700" font-family="Liberation Sans" fill="#333">abc</text><rect x="11" y="12" width="8" height="8" rx="1" fill="#34568a"/><path d="M13 16 H17 M15 14 L17 16 L15 18" fill="none" stroke="#fff" stroke-width="1.3"/></svg>
<svg class="r" style="left:717.8px;top:77.5px;" width="20" height="20" viewBox="0 0 20 20"><path d="M1 8 L5 3 H19 V13 H5 Z" fill="#f5e35a" stroke="#c8b030" stroke-width="0.8"/><text x="11" y="11" text-anchor="middle" font-size="8" font-weight="700" font-family="Liberation Sans" fill="#333">ab</text><rect x="11" y="12" width="8" height="8" rx="1" fill="#34568a"/><path d="M13 18 A2.5 2.5 0 1 1 17 17" fill="none" stroke="#fff" stroke-width="1.2"/></svg>
<svg class="r" style="left:743.0px;top:77.5px;" width="20" height="20" viewBox="0 0 20 20"><path d="M1 8 L5 3 H19 V13 H5 Z" fill="#f5e35a" stroke="#c8b030" stroke-width="0.8"/><text x="12" y="11" text-anchor="middle" font-size="8" font-weight="700" font-family="Liberation Sans" fill="#333">abc</text><rect x="12" y="12" width="7" height="7" fill="#e2c230"/></svg>
<svg class="r" style="left:780.5px;top:77.5px;" width="20" height="20" viewBox="0 0 20 20"><path d="M2 4 V16 A8 3 0 0 0 18 16 V4" fill="#4f7fbf" stroke="#2f5f9f" stroke-width="1"/><ellipse cx="10" cy="4" rx="8" ry="3" fill="#8fb0e0" stroke="#2f5f9f"/><path d="M2 8.5 A8 3 0 0 0 18 8.5 M2 12.5 A8 3 0 0 0 18 12.5" fill="none" stroke="#9fc0e8" stroke-width="1"/></svg>
<svg class="r" style="left:818.0px;top:77.5px;" width="20" height="20" viewBox="0 0 20 20"><circle cx="9.5" cy="9.5" r="8" fill="#8fb4e0" stroke="#5a7aa8"/><path d="M9.5 1.5 V17.5 M1.5 9.5 H17.5" stroke="#4a6a9a" stroke-width="1"/><ellipse cx="9.5" cy="9.5" rx="4" ry="8" fill="none" stroke="#4a6a9a"/><path d="M4 5 Q7 8 5 12 M13 4 Q12 8 15 11" stroke="#3a5a8a" stroke-width="1.5" fill="none"/><rect x="12" y="12" width="8" height="8" rx="1" fill="#3f8f4f"/><path d="M16 13.5 V18.5 M13.5 16 H18.5" stroke="#fff" stroke-width="1.8"/></svg>
<svg class="r" style="left:843.9px;top:77.5px;" width="20" height="20" viewBox="0 0 20 20"><circle cx="9.5" cy="9.5" r="8" fill="#8fb4e0" stroke="#5a7aa8"/><path d="M9.5 1.5 V17.5 M1.5 9.5 H17.5" stroke="#4a6a9a" stroke-width="1"/><ellipse cx="9.5" cy="9.5" rx="4" ry="8" fill="none" stroke="#4a6a9a"/><rect x="12" y="12" width="8" height="8" rx="1" fill="#3f8f4f"/><path d="M16 13.5 V18.5 M13.5 16 H18.5" stroke="#fff" stroke-width="1.8"/></svg>
<svg class="r" style="left:870.0px;top:77.5px;" width="20" height="20" viewBox="0 0 20 20"><circle cx="10" cy="9" r="8" fill="#8fb4e0" stroke="#3a5a8a"/><path d="M10 1 V17 M2 9 H18" stroke="#4a6a9a" stroke-width="1"/><ellipse cx="10" cy="9" rx="4" ry="8" fill="none" stroke="#4a6a9a"/><circle cx="6" cy="16" r="3.5" fill="#111"/><circle cx="14" cy="16" r="3.5" fill="#111"/><rect x="6" y="12" width="8" height="3" fill="#111"/></svg>
<svg class="r" style="left:907.5px;top:77.5px;" width="20" height="20" viewBox="0 0 20 20"><path d="M10 1 Q4 1 4 5 V8 H10 V9 H3 Q1 9 1 13 Q1 17 4 17 H6 V14 Q6 11 9 11 H13 Q16 11 16 8 V5 Q16 1 10 1 Z" fill="#3f6fb0"/><path d="M10 19 Q16 19 16 15 V12 H10 V11 H17 Q19 11 19 7 Q19 3 16 3 H14 V6 Q14 9 11 9 H7 Q4 9 4 12 V15 Q4 19 10 19 Z" fill="#f5cf3a"/><path d="M14 14 L18 17 L14 19" fill="none" stroke="#333" stroke-width="0.8"/></svg>
<svg class="r" style="left:933.8px;top:77.5px;" width="20" height="20" viewBox="0 0 20 20"><rect x="0.5" y="2" width="19" height="11" rx="3" fill="#3f6fb0"/><text x="10" y="11" text-anchor="middle" font-size="7.5" font-weight="700" font-family="Liberation Sans" fill="#fff">KML</text><rect x="12" y="12" width="8" height="8" rx="1" fill="#3f8f4f"/><path d="M16 13.5 V18.5 M13.5 16 H18.5" stroke="#fff" stroke-width="1.8"/></svg>
<svg class="r" style="left:959.1px;top:77.5px;" width="20" height="20" viewBox="0 0 20 20"><rect x="0.5" y="2" width="19" height="11" rx="3" fill="#3f6fb0"/><text x="10" y="11" text-anchor="middle" font-size="7.5" font-weight="700" font-family="Liberation Sans" fill="#fff">KMZ</text><rect x="12" y="12" width="8" height="8" rx="1" fill="#34568a"/><path d="M16 13.5 V18.5 M13.5 16 H18.5" stroke="#fff" stroke-width="1.8"/></svg>
<svg class="r" style="left:984.9px;top:77.5px;" width="20" height="20" viewBox="0 0 20 20"><rect x="0.5" y="2" width="19" height="11" rx="3" fill="#3f6fb0"/><text x="10" y="11" text-anchor="middle" font-size="6.5" font-weight="700" font-family="Liberation Sans" fill="#fff">HTML</text><rect x="12" y="12" width="8" height="8" rx="1" fill="#e2c230"/><path d="M16 13.5 V18.5 M13.8 14.5 L18.2 17.5 M18.2 14.5 L13.8 17.5" stroke="#fff" stroke-width="1.2"/></svg>
<svg class="r" style="left:1011.0px;top:77.5px;" width="20" height="20" viewBox="0 0 20 20"><path d="M2 13 Q0 7 5 5 Q9 1 14 4 Q19 5 18 11 Q17 15 12 15 H5 Q2 15 2 13 Z" fill="#34568a"/><rect x="6" y="6" width="4" height="4" fill="#8fb0e0"/><rect x="10" y="10" width="4" height="4" fill="#8fb0e0"/><rect x="12" y="12" width="8" height="8" rx="1" fill="#3f8f4f"/><path d="M16 13.5 V18.5 M13.5 16 H18.5" stroke="#fff" stroke-width="1.8"/></svg>
<svg class="r" style="left:1036.3px;top:77.5px;" width="20" height="20" viewBox="0 0 20 20"><rect x="1.0" y="1.0" width="3.8" height="3.8" fill="#c8a0e0"/><rect x="5.7" y="1.0" width="3.8" height="3.8" fill="#f0a070"/><rect x="10.4" y="1.0" width="3.8" height="3.8" fill="#90d090"/><rect x="15.100000000000001" y="1.0" width="3.8" height="3.8" fill="#80c0f0"/><rect x="1.0" y="5.7" width="3.8" height="3.8" fill="#c8a0e0"/><rect x="5.7" y="5.7" width="3.8" height="3.8" fill="#f0a070"/><rect x="10.4" y="5.7" width="3.8" height="3.8" fill="#90d090"/><rect x="15.100000000000001" y="5.7" width="3.8" height="3.8" fill="#80c0f0"/><rect x="1.0" y="10.4" width="3.8" height="3.8" fill="#c8a0e0"/><rect x="5.7" y="10.4" width="3.8" height="3.8" fill="#f0a070"/><rect x="10.4" y="10.4" width="3.8" height="3.8" fill="#90d090"/><rect x="15.100000000000001" y="10.4" width="3.8" height="3.8" fill="#80c0f0"/><rect x="1.0" y="15.100000000000001" width="3.8" height="3.8" fill="#c8a0e0"/><rect x="5.7" y="15.100000000000001" width="3.8" height="3.8" fill="#f0a070"/><rect x="10.4" y="15.100000000000001" width="3.8" height="3.8" fill="#90d090"/><rect x="15.100000000000001" y="15.100000000000001" width="3.8" height="3.8" fill="#80c0f0"/></svg>
<svg class="r" style="left:1062.3px;top:77.5px;" width="20" height="20" viewBox="0 0 20 20"><rect x="1.5" y="1.5" width="15" height="15" fill="#fff" stroke="#5a82b8" stroke-width="1.2"/><path d="M1.5 6.5 H16.5 M1.5 11.5 H16.5 M6.5 1.5 V16.5 M11.5 1.5 V16.5" stroke="#5a82b8"/><rect x="12" y="12" width="8" height="8" rx="1" fill="#e2c230"/><path d="M16 13.5 V18.5 M13.8 14.5 L18.2 17.5 M18.2 14.5 L13.8 17.5" stroke="#fff" stroke-width="1.2"/></svg>
<svg class="r" style="left:1100.2px;top:77.5px;" width="20" height="20" viewBox="0 0 20 20"><rect x="3" y="1" width="14" height="18" rx="1" fill="#5b84c0" stroke="#1f2f4a" stroke-width="1.2"/><rect x="3" y="1" width="3" height="18" fill="#1f2f4a"/><text x="11.5" y="14" text-anchor="middle" font-size="11" font-family="Liberation Sans" fill="#cfe0f5">?</text></svg>
<svg class="r" style="left:1137.3px;top:77.5px;" width="20" height="20" viewBox="0 0 20 20"><path d="M3 3 L10 8 L17 3 L15 12 L8 17 L3 13 Z" fill="#5b84c0" stroke="#34568a"/><circle cx="3" cy="3" r="2" fill="#f0d030" stroke="#333" stroke-width="0.6"/><circle cx="17" cy="3" r="2" fill="#f0d030" stroke="#333" stroke-width="0.6"/><circle cx="3" cy="17" r="2" fill="#f0d030" stroke="#333" stroke-width="0.6"/><circle cx="10" cy="8" r="1.5" fill="#f0d030"/><path d="M12 17 L15 14 L17 16" fill="none" stroke="#f0d030" stroke-width="1.5"/></svg>
<svg class="r" style="left:320px;top:85.5px;" width="8" height="5" viewBox="0 0 8 5"><path d="M0 0 H8 L4 4.5 Z" fill="#999"/></svg>
<div class="r" style="left:512px;top:75px;width:1px;height:25px;background:#c8c8c8;"></div>
<div class="r" style="left:517px;top:78px;width:2px;height:20px;background-image:repeating-linear-gradient(#b4b4b4 0 1px, transparent 1px 3px)"></div>
<div class="r" style="left:577.5px;top:75px;width:1px;height:25px;background:#c8c8c8;"></div>
<div class="r" style="left:634px;top:75px;width:1px;height:25px;background:#c8c8c8;"></div>
<div class="r" style="left:767.5px;top:75px;width:1px;height:25px;background:#c8c8c8;"></div>
<div class="r" style="left:772.5px;top:78px;width:2px;height:20px;background-image:repeating-linear-gradient(#b4b4b4 0 1px, transparent 1px 3px)"></div>
<div class="r" style="left:805.6px;top:75px;width:1px;height:25px;background:#c8c8c8;"></div>
<div class="r" style="left:810.6px;top:78px;width:2px;height:20px;background-image:repeating-linear-gradient(#b4b4b4 0 1px, transparent 1px 3px)"></div>
<div class="r" style="left:894px;top:75px;width:1px;height:25px;background:#c8c8c8;"></div>
<div class="r" style="left:899px;top:78px;width:2px;height:20px;background-image:repeating-linear-gradient(#b4b4b4 0 1px, transparent 1px 3px)"></div>
<div class="r" style="left:1087.3px;top:75px;width:1px;height:25px;background:#c8c8c8;"></div>
<div class="r" style="left:1092px;top:78px;width:2px;height:20px;background-image:repeating-linear-gradient(#b4b4b4 0 1px, transparent 1px 3px)"></div>
<div class="r" style="left:1124.8px;top:75px;width:1px;height:25px;background:#c8c8c8;"></div>
<div class="r" style="left:1129.5px;top:78px;width:2px;height:20px;background-image:repeating-linear-gradient(#b4b4b4 0 1px, transparent 1px 3px)"></div>
<div class="r" style="left:4px;top:106px;width:2px;height:20px;background-image:repeating-linear-gradient(#b4b4b4 0 1px, transparent 1px 3px)"></div>
<svg class="r" style="left:12.3px;top:106.0px;" width="20" height="20" viewBox="0 0 20 20"><path d="M4 18 V4 H15" fill="none" stroke="#cfcfcf" stroke-width="1.4" stroke-dasharray="2 1"/><circle cx="16" cy="4" r="2" fill="#ddd"/></svg>
<svg class="r" style="left:38.0px;top:106.0px;" width="20" height="20" viewBox="0 0 20 20"><path d="M2 18 V3 L17 18 Z" fill="none" stroke="#cfcfcf" stroke-width="1.4"/><path d="M6 14 V10 L10 14 Z" fill="none" stroke="#cfcfcf"/><path d="M13 2 V10 M17 2 V10" stroke="#cfcfcf" stroke-width="1.4"/></svg>
<svg class="r" style="left:64.0px;top:106.0px;" width="20" height="20" viewBox="0 0 20 20"><path d="M3 4 Q6 1 10 3 Q15 1 17 5 Q18 9 14 10 Q11 11 9 9 Q5 10 3 8 Z" fill="#e2e2e2" stroke="#cfcfcf" stroke-width="1.3"/><rect x="11" y="11" width="7" height="7" rx="1" fill="#dadada" stroke="#cacaca"/></svg>
<svg class="r" style="left:103.5px;top:106.0px;" width="20" height="20" viewBox="0 0 20 20"><path d="M3 4 Q6 1 10 3 Q15 1 17 5 Q18 9 14 10 Q11 11 9 9 Q5 10 3 8 Z" fill="#e2e2e2" stroke="#cfcfcf" stroke-width="1.3"/><rect x="11" y="11" width="7" height="7" rx="1" fill="#dadada" stroke="#cacaca"/></svg>
<svg class="r" style="left:129.0px;top:106.0px;" width="20" height="20" viewBox="0 0 20 20"><path d="M2 6 Q3 2 8 3 Q12 1 16 4 Q18 8 15 10 Q16 15 11 16 Q6 17 4 14 Q1 11 3 8 Z" fill="#e2e2e2" stroke="#cfcfcf" stroke-width="1.3"/><rect x="11" y="11" width="7" height="7" rx="1" fill="#dadada" stroke="#cacaca"/></svg>
<svg class="r" style="left:154.8px;top:106.0px;" width="20" height="20" viewBox="0 0 20 20"><path d="M3 4 Q6 1 10 3 Q15 1 17 5 Q18 9 14 10 Q11 11 9 9 Q5 10 3 8 Z" fill="#e2e2e2" stroke="#cfcfcf" stroke-width="1.3"/><rect x="11" y="11" width="7" height="7" rx="1" fill="#dadada" stroke="#cacaca"/></svg>
<svg class="r" style="left:180.5px;top:106.0px;" width="20" height="20" viewBox="0 0 20 20"><path d="M2 6 Q3 2 8 3 Q12 1 16 4 Q18 8 15 10 Q16 15 11 16 Q6 17 4 14 Q1 11 3 8 Z" fill="#e2e2e2" stroke="#cfcfcf" stroke-width="1.3"/><rect x="11" y="11" width="7" height="7" rx="1" fill="#dadada" stroke="#cacaca"/></svg>
<svg class="r" style="left:206.3px;top:106.0px;" width="20" height="20" viewBox="0 0 20 20"><path d="M3 4 Q6 1 10 3 Q15 1 17 5 Q18 9 14 10 Q11 11 9 9 Q5 10 3 8 Z" fill="#e2e2e2" stroke="#cfcfcf" stroke-width="1.3"/><rect x="11" y="11" width="7" height="7" rx="1" fill="#dadada" stroke="#cacaca"/></svg>
<svg class="r" style="left:231.8px;top:106.0px;" width="20" height="20" viewBox="0 0 20 20"><path d="M3 4 Q6 1 10 3 Q15 1 17 5 Q18 9 14 10 Q11 11 9 9 Q5 10 3 8 Z" fill="#e2e2e2" stroke="#cfcfcf" stroke-width="1.3"/><rect x="11" y="11" width="7" height="7" rx="1" fill="#dadada" stroke="#cacaca"/></svg>
<svg class="r" style="left:257.8px;top:106.0px;" width="20" height="20" viewBox="0 0 20 20"><path d="M2 6 Q3 2 8 3 Q12 1 16 4 Q18 8 15 10 Q16 15 11 16 Q6 17 4 14 Q1 11 3 8 Z" fill="#e2e2e2" stroke="#cfcfcf" stroke-width="1.3"/><rect x="11" y="11" width="7" height="7" rx="1" fill="#dadada" stroke="#cacaca"/></svg>
<svg class="r" style="left:283.2px;top:106.0px;" width="20" height="20" viewBox="0 0 20 20"><path d="M3 10 Q3 3 10 3 Q18 3 17 10 Q16 17 9 17 Q3 17 3 10 Z" fill="#e2e2e2" stroke="#cfcfcf" stroke-width="1.3" transform="rotate(-30 10 10)"/></svg>
<svg class="r" style="left:309.0px;top:106.0px;" width="20" height="20" viewBox="0 0 20 20"><path d="M3 10 Q3 3 10 3 Q18 3 17 10 Q16 17 9 17 Q3 17 3 10 Z" fill="#e2e2e2" stroke="#cfcfcf" stroke-width="1.3" transform="rotate(-30 10 10)"/></svg>
<svg class="r" style="left:335.5px;top:106.0px;" width="20" height="20" viewBox="0 0 20 20"><path d="M3 5 L8 18 L12 10 L18 14" fill="none" stroke="#cfcfcf" stroke-width="1.6"/><rect x="2" y="2" width="5" height="5" fill="#e6e6e6" stroke="#cfcfcf"/></svg>
<svg class="r" style="left:362.2px;top:106.0px;" width="20" height="20" viewBox="0 0 20 20"><path d="M3 4 H17 M3 8 H17 M3 12 H17 M3 16 H17" stroke="#cfcfcf" stroke-width="1"/><path d="M10 2 V18" stroke="#cfcfcf" stroke-width="1.5"/></svg>
<svg class="r" style="left:386.5px;top:106.0px;" width="20" height="20" viewBox="0 0 20 20"><circle cx="6" cy="7" r="4" fill="#e6e6e6" stroke="#cfcfcf" stroke-width="1.3"/><circle cx="14" cy="7" r="4" fill="#e6e6e6" stroke="#cfcfcf" stroke-width="1.3"/><path d="M6 14 Q7 18 10 15 Q13 18 14 14" fill="none" stroke="#cfcfcf" stroke-width="1.4"/></svg>
<svg class="r" style="left:412.5px;top:106.0px;" width="20" height="20" viewBox="0 0 20 20"><circle cx="6" cy="7" r="4" fill="#e6e6e6" stroke="#cfcfcf" stroke-width="1.3"/><circle cx="14" cy="7" r="4" fill="#e6e6e6" stroke="#cfcfcf" stroke-width="1.3"/><path d="M6 14 Q7 18 10 15 Q13 18 14 14" fill="none" stroke="#cfcfcf" stroke-width="1.4"/></svg>
<svg class="r" style="left:438.2px;top:106.0px;" width="20" height="20" viewBox="0 0 20 20"><circle cx="6" cy="7" r="4" fill="#e6e6e6" stroke="#cfcfcf" stroke-width="1.3"/><circle cx="14" cy="7" r="4" fill="#e6e6e6" stroke="#cfcfcf" stroke-width="1.3"/><path d="M6 14 Q7 18 10 15 Q13 18 14 14" fill="none" stroke="#cfcfcf" stroke-width="1.4"/></svg>
<svg class="r" style="left:463.8px;top:106.0px;" width="20" height="20" viewBox="0 0 20 20"><path d="M3 4 H17 M3 8 H17 M3 12 H17 M3 16 H17" stroke="#cfcfcf" stroke-width="1"/><path d="M10 2 V18" stroke="#cfcfcf" stroke-width="1.5"/></svg>
<svg class="r" style="left:490.5px;top:106.0px;" width="20" height="20" viewBox="0 0 20 20"><path d="M4 14 A7 7 0 0 1 8 3" fill="none" stroke="#cfcfcf" stroke-width="1.3"/><path d="M10 2 L18 7 L10 11 Z" fill="#e2e2e2" stroke="#cfcfcf"/><path d="M10 11 V18" stroke="#cfcfcf"/></svg>
<svg class="r" style="left:90px;top:114px;" width="8" height="5" viewBox="0 0 8 5"><path d="M0 0 H8 L4 4.5 Z" fill="#999"/></svg>
<svg class="r" style="left:516px;top:114px;" width="8" height="5" viewBox="0 0 8 5"><path d="M0 0 H8 L4 4.5 Z" fill="#999"/></svg>
<div class="r" style="left:527px;top:104px;width:1px;height:24px;background:#c8c8c8;"></div>
<div class="r" style="left:531px;top:106px;width:2px;height:20px;background-image:repeating-linear-gradient(#b4b4b4 0 1px, transparent 1px 3px)"></div>
<div class="r" style="left:537px;top:104px;width:27px;height:24px;background:#cce4f7;border:1px solid #99c9ef;box-sizing:border-box;"></div>
<div class="r" style="left:589px;top:104px;width:26px;height:24px;background:#cce4f7;border:1px solid #99c9ef;box-sizing:border-box;"></div>
<div class="r" style="left:776px;top:104px;width:26.5px;height:24px;background:#cce4f7;border:1px solid #99c9ef;box-sizing:border-box;"></div>
<div class="r" style="left:828px;top:104px;width:25.75px;height:24px;background:#cce4f7;border:1px solid #99c9ef;box-sizing:border-box;"></div>
<svg class="r" style="left:541.0px;top:106.0px;" width="20" height="20" viewBox="0 0 20 20"><g transform="rotate(-45 10 10)"><path d="M5 3 V10 A5 5 0 0 0 15 10 V3" fill="none" stroke="#c81818" stroke-width="4.2"/><rect x="2.9" y="2" width="4.2" height="3.2" fill="#f4f4f4"/><rect x="12.9" y="2" width="4.2" height="3.2" fill="#f4f4f4"/></g></svg>
<svg class="r" style="left:567.0px;top:106.0px;" width="20" height="20" viewBox="0 0 20 20"><path d="M4 16 L9 3 M9 16 L3 9 M9 16 L14 8" stroke="#7aa070" stroke-width="1.8" fill="none"/><circle cx="13" cy="3" r="1.5" fill="#999"/><circle cx="17" cy="3" r="1.5" fill="#999"/><circle cx="13" cy="7" r="1.5" fill="#999"/><circle cx="17" cy="7" r="1.5" fill="#999"/><path d="M13 14 H19 L16 18 Z" fill="#111"/></svg>
<svg class="r" style="left:592.0px;top:106.0px;" width="20" height="20" viewBox="0 0 20 20"><path d="M3 4 L9 16 L15 4" fill="none" stroke="#7aa870" stroke-width="1.6"/><path d="M13 14 H19 L16 18 Z" fill="#111"/></svg>
<svg class="r" style="left:779.0px;top:106.0px;" width="20" height="20" viewBox="0 0 20 20"><path d="M9 10 L4 2 M9 10 L18 7 M9 10 L9 19" stroke="#7aa870" stroke-width="1.6"/><circle cx="9" cy="10" r="2" fill="none" stroke="#7aa870" stroke-width="1.3"/></svg>
<svg class="r" style="left:805.3px;top:106.0px;" width="20" height="20" viewBox="0 0 20 20"><path d="M7 4 Q14 1 17 6 Q18 10 14 12 L12 17 Q7 18 6 13 Z" fill="#ccc" stroke="#555"/><circle cx="6" cy="6" r="4.5" fill="#d01818"/><path d="M5 12 L10 18 L15 15 L9 8 Z" fill="#90c080" stroke="#333" stroke-width="0.8"/><path d="M13 15 H18 L15.5 18 Z" fill="#111"/></svg>
<svg class="r" style="left:831.0px;top:106.0px;" width="20" height="20" viewBox="0 0 20 20"><path d="M2 2 L18 18 M18 2 L2 18" stroke="#7aa870" stroke-width="1.5"/><circle cx="10" cy="10" r="1.8" fill="none" stroke="#7aa870"/></svg>
<svg class="r" style="left:856.5px;top:106.0px;" width="20" height="20" viewBox="0 0 20 20"><path d="M2 18 L18 2" stroke="#7aa870" stroke-width="1.5"/><path d="M3 5 L9 12 L15 7 L16 13 L10 17" fill="none" stroke="#f0d020" stroke-width="3"/></svg>
<svg class="r" style="left:894.3px;top:106.0px;" width="20" height="20" viewBox="0 0 20 20"><path d="M4 16 L10 6 L16 10" fill="none" stroke="#7aa870" stroke-width="1.5"/><circle cx="4" cy="16" r="2" fill="#fff" stroke="#7a9a70"/><circle cx="4" cy="6" r="2" fill="#fff" stroke="#7a9a70"/><path d="M11 3 L17 9 L14 12 L13 5 Z" fill="#f0d020"/></svg>
<svg class="r" style="left:882.5px;top:114px;" width="8" height="5" viewBox="0 0 8 5"><path d="M0 0 H8 L4 4.5 Z" fill="#111"/></svg>
<div class="r" style="left:615.6px;top:108px;width:72px;height:16.4px;background:#fff;border:1px solid #a8a8a8;box-sizing:border-box;"></div>
<div class="t" style="left:618px;top:111.69px;font-size:11px;line-height:11px;font-weight:400;color:#111;font-style:normal;">20</div>
<svg class="r" style="left:675px;top:109px;" width="11" height="14" viewBox="0 0 11 14"><path d="M2 6 L5.5 2 L9 6 Z M2 8 L5.5 12 L9 8 Z" fill="#333"/></svg>
<div class="r" style="left:688.75px;top:108px;width:87px;height:16.4px;background:#e3e3e3;border:1px solid #d4d4d4;box-sizing:border-box;"></div>
<div class="t" style="left:690.6px;top:111.69px;font-size:11px;line-height:11px;font-weight:400;color:#111;font-style:normal;">px</div>
<svg class="r" style="left:762px;top:113px;" width="10" height="6" viewBox="0 0 10 6"><path d="M1 1 L5 5 L9 1" fill="none" stroke="#555" stroke-width="1.2"/></svg>
<div class="r" style="left:4px;top:136px;width:2px;height:30px;background-image:repeating-linear-gradient(#b4b4b4 0 1px, transparent 1px 3px)"></div>
<svg class="r" style="left:12.5px;top:141.0px;" width="20" height="20" viewBox="0 0 20 20"><rect x="2" y="3" width="14" height="13" fill="#f0e030" stroke="#333" stroke-width="1" stroke-dasharray="1.5 1"/><path d="M9 8 L9 19 L11.5 16.5 L13.5 20 L15 19 L13 15.5 L17 15.5 Z" fill="#fff" stroke="#444" stroke-width="0.9"/></svg>
<svg class="r" style="left:51.0px;top:141.0px;" width="20" height="20" viewBox="0 0 20 20"><rect x="1" y="2" width="11" height="10" fill="#d8d8d8" stroke="#888"/><path d="M1 5.5 H12 M1 9 H12" stroke="#888"/><rect x="5" y="9" width="12" height="9" fill="#f0e030" stroke="#a89020" stroke-width="0.8"/></svg>
<svg class="r" style="left:90.3px;top:141.0px;" width="20" height="20" viewBox="0 0 20 20"><rect x="1" y="1" width="10" height="10" fill="#f0e030" stroke="#a89020" stroke-width="0.8"/><rect x="4" y="5" width="10" height="10" fill="#f0e030" stroke="#a89020" stroke-width="0.8"/><circle cx="15" cy="15.5" r="4" fill="#d02020"/><path d="M12.5 18 L17.5 13" stroke="#fff" stroke-width="1.3"/></svg>
<svg class="r" style="left:127.9px;top:141.0px;" width="20" height="20" viewBox="0 0 20 20"><rect x="1" y="2" width="12" height="12" fill="#f0e030" stroke="#a89020" stroke-width="0.8"/><path d="M16 12 A2.5 2.5 0 0 1 16 17 L16 19 A2.5 2.5 0 0 1 16 12 Z" fill="#5a8ac8"/><circle cx="16" cy="14.5" r="2.6" fill="#5a8ac8"/></svg>
<svg class="r" style="left:165.0px;top:141.0px;" width="20" height="20" viewBox="0 0 20 20"><path d="M10 1 L13 5 H11 V9 H9 V5 H7 Z" fill="#111"/><rect x="3" y="10" width="14" height="9" fill="#111"/><circle cx="10" cy="14.5" r="2.5" fill="#fff"/></svg>
<svg class="r" style="left:190.5px;top:141.0px;" width="20" height="20" viewBox="0 0 20 20"><rect x="1.5" y="2.5" width="15" height="11" fill="none" stroke="#111" stroke-width="2.2" stroke-dasharray="3 1.5"/><rect x="4" y="5" width="10" height="6" fill="#333"/><path d="M11 9 L11 19 L13.3 16.8 L15.2 20 L16.6 19.2 L14.7 16 L18 16 Z" fill="#fff" stroke="#111" stroke-width="0.9"/></svg>
<svg class="r" style="left:228.0px;top:141.0px;" width="20" height="20" viewBox="0 0 20 20"><rect x="1" y="1" width="18" height="18" fill="#5fae4f"/><circle cx="11" cy="8.5" r="5" fill="none" stroke="#d8f0d0" stroke-width="1.8"/><path d="M7.5 12 L3 17" stroke="#d8f0d0" stroke-width="2"/></svg>
<svg class="r" style="left:254.0px;top:141.0px;" width="20" height="20" viewBox="0 0 20 20"><rect x="1" y="1" width="18" height="18" fill="#f0d030"/><path d="M1 8 Q6 6 8 12 Q10 18 19 15 V19 H1 Z" fill="#5a8ac8"/><path d="M2 3 Q5 8 3 12" stroke="#3a8a3a" stroke-width="2" fill="none"/><path d="M7 15 L18 2" stroke="#8a4a1a" stroke-width="3"/></svg>
<svg class="r" style="left:291.3px;top:141.0px;" width="20" height="20" viewBox="0 0 20 20"><path d="M3 17 L12 8" stroke="#cfcfcf" stroke-width="2"/><path d="M11 5 L15 9 L18 6 Q19 3 16 2 Z" fill="#ddd" stroke="#cfcfcf"/></svg>
<svg class="r" style="left:315.0px;top:141.0px;" width="20" height="20" viewBox="0 0 20 20"><rect x="4" y="3" width="12" height="14" fill="#dedede"/></svg>
<svg class="r" style="left:468.9px;top:141.0px;" width="20" height="20" viewBox="0 0 20 20"><path d="M3 17 L15 3 L18 6 L6 19 Z" fill="#eee" stroke="#cfcfcf" stroke-width="1.2"/></svg>
<svg class="r" style="left:495.3px;top:141.0px;" width="20" height="20" viewBox="0 0 20 20"><path d="M2 14 L12 4 Q16 2 18 6 Q18 10 8 18 Z" fill="#ddd" stroke="#cfcfcf" stroke-width="1.2"/></svg>
<svg class="r" style="left:520.8px;top:141.0px;" width="20" height="20" viewBox="0 0 20 20"><path d="M3 17 L14 4 L18 8 L7 19 Z" fill="#d8d8d8" stroke="#cfcfcf" stroke-width="1.2"/><path d="M3 17 L5 13 L7 19 Z" fill="#fff"/></svg>
<svg class="r" style="left:546.5px;top:141.0px;" width="20" height="20" viewBox="0 0 20 20"><rect x="1" y="1" width="18" height="18" fill="#ececec"/><text x="10" y="15" text-anchor="middle" font-size="14" font-family="Liberation Serif" fill="#cfcfcf">ε</text></svg>
<svg class="r" style="left:572.2px;top:141.0px;" width="20" height="20" viewBox="0 0 20 20"><rect x="1" y="1" width="18" height="18" fill="#ececec"/><path d="M2 12 Q6 2 10 10 Q14 18 18 8" fill="none" stroke="#cfcfcf" stroke-width="1.8"/></svg>
<svg class="r" style="left:597.8px;top:141.0px;" width="20" height="20" viewBox="0 0 20 20"><rect x="1" y="1" width="18" height="18" fill="#ececec"/><path d="M5 10 A5 5 0 1 0 10 5" fill="none" stroke="#cfcfcf" stroke-width="2"/><path d="M10 2 L13 5 L10 8 Z" fill="#cfcfcf"/></svg>
<svg class="r" style="left:623.5px;top:141.0px;" width="20" height="20" viewBox="0 0 20 20"><rect x="1" y="1" width="18" height="18" fill="#ececec"/><path d="M5 10 A5 5 0 1 0 10 5" fill="none" stroke="#cfcfcf" stroke-width="2"/><path d="M10 2 L13 5 L10 8 Z" fill="#cfcfcf"/></svg>
<svg class="r" style="left:649.5px;top:141.0px;" width="20" height="20" viewBox="0 0 20 20"><rect x="1" y="1" width="18" height="18" fill="#ececec"/><path d="M4 16 L16 4" stroke="#cfcfcf" stroke-width="4"/></svg>
<svg class="r" style="left:675.6px;top:141.0px;" width="20" height="20" viewBox="0 0 20 20"><rect x="1" y="1" width="18" height="18" fill="#8a9ab0"/><path d="M1 1 H8 L4 10 L1 19 Z" fill="#4a5a70"/><path d="M5 18 L14 8" stroke="#f0d030" stroke-width="3"/><circle cx="15" cy="6" r="3" fill="none" stroke="#fff" stroke-width="1.5"/></svg>
<svg class="r" style="left:701.5px;top:141.0px;" width="20" height="20" viewBox="0 0 20 20"><rect x="1" y="1" width="18" height="18" rx="1" fill="#3f6fb0"/><rect x="1" y="1" width="5" height="18" fill="#20a040"/><path d="M3.5 2 V18" stroke="#80e080" stroke-width="1.2"/><text x="12.5" y="15" text-anchor="middle" font-size="13" font-weight="700" font-family="Liberation Sans" fill="#fff">?</text></svg>
<svg class="r" style="left:733.0px;top:141.0px;" width="20" height="20" viewBox="0 0 20 20"><rect x="2" y="7" width="10" height="2.4" fill="#111"/><rect x="2" y="11" width="10" height="2.4" fill="#111"/></svg>
<svg class="r" style="left:870.8px;top:141.0px;" width="20" height="20" viewBox="0 0 20 20"><path d="M2 3 L16 3 L18 14 L9 17 L3 12 Z" fill="#ececec" stroke="#d8d8d8" stroke-width="1" stroke-dasharray="1.5 1"/><path d="M8 6 L8 15 L10 13 L12 16 L13 15 L11 12 L14 12 Z" fill="#fff" stroke="#cfcfcf" stroke-width="0.8"/></svg>
<svg class="r" style="left:896.8px;top:141.0px;" width="20" height="20" viewBox="0 0 20 20"><path d="M2 3 L16 3 L18 14 L9 17 L3 12 Z" fill="#ececec" stroke="#d8d8d8" stroke-width="1" stroke-dasharray="1.5 1"/><path d="M8 6 L8 15 L10 13 L12 16 L13 15 L11 12 L14 12 Z" fill="#fff" stroke="#cfcfcf" stroke-width="0.8"/></svg>
<svg class="r" style="left:922.5px;top:141.0px;" width="20" height="20" viewBox="0 0 20 20"><path d="M2 3 L16 3 L18 14 L9 17 L3 12 Z" fill="#ececec" stroke="#d8d8d8" stroke-width="1" stroke-dasharray="1.5 1"/><path d="M8 6 L8 15 L10 13 L12 16 L13 15 L11 12 L14 12 Z" fill="#fff" stroke="#cfcfcf" stroke-width="0.8"/></svg>
<svg class="r" style="left:948.2px;top:141.0px;" width="20" height="20" viewBox="0 0 20 20"><path d="M2 3 L16 3 L18 14 L9 17 L3 12 Z" fill="#ececec" stroke="#d8d8d8" stroke-width="1" stroke-dasharray="1.5 1"/><path d="M8 6 L8 15 L10 13 L12 16 L13 15 L11 12 L14 12 Z" fill="#fff" stroke="#cfcfcf" stroke-width="0.8"/></svg>
<svg class="r" style="left:974.2px;top:141.0px;" width="20" height="20" viewBox="0 0 20 20"><path d="M2 3 L16 3 L18 14 L9 17 L3 12 Z" fill="#ececec" stroke="#d8d8d8" stroke-width="1" stroke-dasharray="1.5 1"/><path d="M8 6 L8 15 L10 13 L12 16 L13 15 L11 12 L14 12 Z" fill="#fff" stroke="#cfcfcf" stroke-width="0.8"/></svg>
<svg class="r" style="left:1000.4px;top:141.0px;" width="20" height="20" viewBox="0 0 20 20"><rect x="4" y="3" width="12" height="14" fill="#dedede"/></svg>
<svg class="r" style="left:38px;top:149px;" width="8" height="5" viewBox="0 0 8 5"><path d="M0 0 H8 L4 4.5 Z" fill="#111"/></svg>
<svg class="r" style="left:76px;top:149px;" width="8" height="5" viewBox="0 0 8 5"><path d="M0 0 H8 L4 4.5 Z" fill="#111"/></svg>
<svg class="r" style="left:114px;top:149px;" width="8" height="5" viewBox="0 0 8 5"><path d="M0 0 H8 L4 4.5 Z" fill="#111"/></svg>
<svg class="r" style="left:338px;top:149px;" width="8" height="5" viewBox="0 0 8 5"><path d="M0 0 H8 L4 4.5 Z" fill="#999"/></svg>
<div class="r" style="left:152.5px;top:133px;width:1px;height:37px;background:#c8c8c8;"></div>
<div class="r" style="left:157px;top:136px;width:2px;height:30px;background-image:repeating-linear-gradient(#b4b4b4 0 1px, transparent 1px 3px)"></div>
<div class="r" style="left:215.6px;top:133px;width:1px;height:37px;background:#c8c8c8;"></div>
<div class="r" style="left:220px;top:136px;width:2px;height:30px;background-image:repeating-linear-gradient(#b4b4b4 0 1px, transparent 1px 3px)"></div>
<div class="r" style="left:279px;top:133px;width:1px;height:37px;background:#c8c8c8;"></div>
<div class="r" style="left:283px;top:136px;width:2px;height:30px;background-image:repeating-linear-gradient(#b4b4b4 0 1px, transparent 1px 3px)"></div>
<div class="r" style="left:726px;top:133px;width:1px;height:37px;background:#c8c8c8;"></div>
<div class="r" style="left:730.6px;top:136px;width:2px;height:30px;background-image:repeating-linear-gradient(#b4b4b4 0 1px, transparent 1px 3px)"></div>
<div class="t" style="left:348.75px;top:145.69px;font-size:11px;line-height:11px;font-weight:400;color:#111;font-style:normal;">Band:</div>
<div class="r" style="left:376px;top:142.5px;width:31px;height:18px;background:#cdcdcd;border:1px solid #c4c4c4;box-sizing:border-box;"></div>
<div class="t" style="left:380px;top:145.69px;font-size:11px;line-height:11px;font-weight:400;color:#8a8a8a;font-style:normal;">1</div>
<svg class="r" style="left:394px;top:148px;" width="9" height="6" viewBox="0 0 9 6"><path d="M1 1 L4.5 4.5 L8 1" fill="none" stroke="#aaa" stroke-width="1"/></svg>
<div class="r" style="left:416px;top:143px;width:41px;height:18px;background:#f4f4f4;border:1px solid #d8d8d8;box-sizing:border-box;"></div>
<div class="t" style="left:418px;top:147.11px;font-size:10.5px;line-height:10.5px;font-weight:400;color:#777;font-style:normal;">0,0000</div>
<div class="r" style="left:747px;top:142px;width:41px;height:19px;background:#f4f4f4;border:1px solid #d8d8d8;box-sizing:border-box;"></div>
<div class="t" style="left:750px;top:146.69px;font-size:11px;line-height:11px;font-weight:400;color:#999;font-style:normal;">1,00</div>
<svg class="r" style="left:776px;top:144px;" width="11" height="15" viewBox="0 0 11 15"><path d="M2 6 L5.5 2 L9 6 M2 9 L5.5 13 L9 9" fill="none" stroke="#777" stroke-width="1.2"/></svg>
<div class="r" style="left:788px;top:143px;width:80px;height:18px;background:#cdcdcd;border:1px solid #c8c8c8;box-sizing:border-box;"></div>
<div class="t" style="left:792px;top:146.69px;font-size:11px;line-height:11px;font-weight:400;color:#8a8a8a;font-style:normal;">map units</div>
<svg class="r" style="left:853px;top:149px;" width="10" height="6" viewBox="0 0 10 6"><path d="M1 1 L5 5 L9 1" fill="none" stroke="#aaa" stroke-width="1"/></svg>
<div class="r" style="left:3px;top:176px;width:36px;height:2px;background-image:repeating-linear-gradient(90deg,#b4b4b4 0 1px, transparent 1px 3px)"></div>
<svg class="r" style="left:4.0px;top:185.0px;" width="20" height="20" viewBox="0 0 20 20"><path d="M2.5 3 L8 16 L13 3.5 L17 3.5" fill="none" stroke="#333" stroke-width="1.4"/><circle cx="2.5" cy="3" r="1.6" fill="#fff" stroke="#333"/><circle cx="8" cy="16" r="1.6" fill="#fff" stroke="#333"/><circle cx="13" cy="3.5" r="1.6" fill="#fff" stroke="#333"/><circle cx="17" cy="3.5" r="1.6" fill="#fff" stroke="#333"/><rect x="12" y="12" width="8" height="8" rx="1" fill="#4f9a4f"/><path d="M16 13.5 V18.5 M13.5 16 H18.5" stroke="#fff" stroke-width="1.8"/></svg>
<svg class="r" style="left:4.0px;top:209.0px;" width="20" height="20" viewBox="0 0 20 20"><rect x="1" y="1" width="15" height="15" fill="#7f9fcf"/><rect x="1" y="1" width="5" height="5" fill="#1f3c6e"/><rect x="11" y="1" width="5" height="5" fill="#1f3c6e"/><rect x="6" y="6" width="5" height="5" fill="#1f3c6e"/><rect x="1" y="11" width="5" height="5" fill="#1f3c6e"/><rect x="12" y="12" width="8" height="8" rx="1" fill="#4f9a4f"/><path d="M16 13.5 V18.5 M13.5 16 H18.5" stroke="#fff" stroke-width="1.8"/></svg>
<svg class="r" style="left:5.0px;top:235.0px;" width="20" height="20" viewBox="0 0 20 20"><rect x="1" y="1" width="16" height="16" fill="#c8d6ea" stroke="#34568a" stroke-width="1.3"/><path d="M9 1 V17 M1 9 H17 M1 1 L9 9 M9 1 L1 9 M9 9 L17 1" stroke="#34568a" stroke-width="1"/><rect x="12" y="12" width="8" height="8" rx="1" fill="#4f9a4f"/><path d="M16 13.5 V18.5 M13.5 16 H18.5" stroke="#fff" stroke-width="1.8"/></svg>
<svg class="r" style="left:5.0px;top:260.0px;" width="20" height="20" viewBox="0 0 20 20"><path d="M8 2 Q14 2 13 8 Q12 14 5 16 Q10 12 9 10 Q4 10 4 6 Q4 2 8 2 Z" fill="#4a78b8"/><rect x="12" y="12" width="8" height="8" rx="1" fill="#4f9a4f"/><path d="M16 13.5 V18.5 M13.5 16 H18.5" stroke="#fff" stroke-width="1.8"/></svg>
<svg class="r" style="left:4.0px;top:285.0px;" width="20" height="20" viewBox="0 0 20 20"><path d="M2 18 Q4 8 17 2 Q14 12 4 16 Z" fill="#6f9ad8" stroke="#34568a" stroke-width="1"/><rect x="12" y="12" width="8" height="8" rx="1" fill="#4f9a4f"/><path d="M16 13.5 V18.5 M13.5 16 H18.5" stroke="#fff" stroke-width="1.8"/></svg>
<svg class="r" style="left:5.0px;top:310.0px;" width="20" height="20" viewBox="0 0 20 20"><rect x="1.5" y="1.5" width="16" height="16" rx="1.5" fill="#c8d6ea" stroke="#5a7aa8" stroke-width="1.2"/><path d="M4.5 4 L9 14 L13 4 H16" fill="none" stroke="#34568a" stroke-width="1.3"/><rect x="12" y="12" width="8" height="8" rx="1" fill="#4f9a4f"/><path d="M16 13.5 V18.5 M13.5 16 H18.5" stroke="#fff" stroke-width="1.8"/></svg>
<svg class="r" style="left:4.0px;top:335.0px;" width="20" height="20" viewBox="0 0 20 20"><path d="M2 4 Q2 1 7 1 H14 Q18 1 18 5 Q18 9 15 10 L14 15 Q12 17 11 14 L10 11 H7 Q2 11 2 7 Z" fill="#4a78b8" stroke="#2a4a7a" stroke-width="1"/><rect x="12" y="12" width="8" height="8" rx="1" fill="#4f9a4f"/><path d="M16 13.5 V18.5 M13.5 16 H18.5" stroke="#fff" stroke-width="1.8"/></svg>
<svg class="r" style="left:4.0px;top:360.0px;" width="20" height="20" viewBox="0 0 20 20"><circle cx="9.5" cy="9.5" r="8" fill="#9fc0e8" stroke="#3a5a8a"/><path d="M4 5 Q8 7 6 11 Q4 14 6 16 M12 3 Q11 8 15 9" stroke="#2a4a7a" stroke-width="2" fill="none"/><path d="M1.5 9.5 H17.5 M9.5 1.5 V17.5" stroke="#3a5a8a" stroke-width="0.8"/><rect x="12" y="12" width="8" height="8" rx="1" fill="#4f9a4f"/><path d="M16 13.5 V18.5 M13.5 16 H18.5" stroke="#fff" stroke-width="1.8"/></svg>
<svg class="r" style="left:4.0px;top:385.0px;" width="20" height="20" viewBox="0 0 20 20"><circle cx="9.5" cy="9.5" r="8" fill="#3a5a8a"/><path d="M1.5 6 H17.5 M1.5 9.5 H17.5 M1.5 13 H17.5 M9.5 1.5 V17.5" stroke="#cfe0f5" stroke-width="1"/><ellipse cx="9.5" cy="9.5" rx="4" ry="8" fill="none" stroke="#cfe0f5"/><rect x="12" y="12" width="8" height="8" rx="1" fill="#4f9a4f"/><path d="M16 13.5 V18.5 M13.5 16 H18.5" stroke="#fff" stroke-width="1.8"/></svg>
<svg class="r" style="left:4.0px;top:410.0px;" width="20" height="20" viewBox="0 0 20 20"><circle cx="9.5" cy="9.5" r="8" fill="#e4ecf6" stroke="#5a7aa8"/><path d="M1.5 9.5 H17.5 M1.5 6 H17.5 M1.5 13 H17.5" stroke="#9ab" stroke-width="0.7"/><path d="M4 5 L8 14 L12 5 H15" fill="none" stroke="#333" stroke-width="1.3"/><rect x="12" y="12" width="8" height="8" rx="1" fill="#4f9a4f"/><path d="M16 13.5 V18.5 M13.5 16 H18.5" stroke="#fff" stroke-width="1.8"/></svg>
<svg class="r" style="left:4.0px;top:435.0px;" width="20" height="20" viewBox="0 0 20 20"><path d="M2.5 3 L8 16 L13 3.5 L17 3.5" fill="none" stroke="#333" stroke-width="1.4"/><circle cx="2.5" cy="3" r="1.6" fill="#fff" stroke="#333"/><circle cx="8" cy="16" r="1.6" fill="#fff" stroke="#333"/><circle cx="13" cy="3.5" r="1.6" fill="#fff" stroke="#333"/><circle cx="17" cy="3.5" r="1.6" fill="#fff" stroke="#333"/><rect x="12" y="12" width="8" height="8" rx="1" fill="#e8c030"/><path d="M16 13.5 V18.5 M13.8 14.5 L18.2 17.5 M18.2 14.5 L13.8 17.5" stroke="#fff" stroke-width="1.2"/></svg>
<svg class="r" style="left:11.0px;top:460.0px;" width="20" height="20" viewBox="0 0 20 20"><rect x="1" y="1" width="16" height="16" fill="#4a78b8"/><path d="M1 5 H17 M1 9 H17 M1 13 H17 M5 1 V17 M9 1 V17 M13 1 V17" stroke="#cfe0f5" stroke-width="1.2"/><rect x="12" y="12" width="8" height="8" rx="1" fill="#4f9a4f"/><path d="M16 13.5 V18.5 M13.5 16 H18.5" stroke="#fff" stroke-width="1.8"/></svg>
<svg class="r" style="left:30px;top:343px;" width="8" height="5" viewBox="0 0 8 5"><path d="M0 0 H8 L4 4.5 Z" fill="#111"/></svg>
<svg class="r" style="left:30px;top:368px;" width="8" height="5" viewBox="0 0 8 5"><path d="M0 0 H8 L4 4.5 Z" fill="#111"/></svg>
<svg class="r" style="left:30px;top:418px;" width="8" height="5" viewBox="0 0 8 5"><path d="M0 0 H8 L4 4.5 Z" fill="#111"/></svg>
<svg class="r" style="left:30px;top:443px;" width="8" height="5" viewBox="0 0 8 5"><path d="M0 0 H8 L4 4.5 Z" fill="#111"/></svg>
<svg class="r" style="left:45.4px;top:204.2px;" width="15" height="15" viewBox="0 0 20 20"><path d="M2 14 Q2 10 6 11 L9 14 Q8 18 4 18 Q1 18 2 14 Z" fill="#e86a30"/><path d="M3 12 Q6 8 10 10" stroke="#f0c030" stroke-width="2.5" fill="none"/><path d="M8 12 L17 3" stroke="#c8a040" stroke-width="2.5"/><path d="M2 16 Q5 13 9 15" stroke="#4a8ad0" stroke-width="2" fill="none"/></svg>
<svg class="r" style="left:64.2px;top:204.2px;" width="15" height="15" viewBox="0 0 20 20"><rect x="2" y="6" width="9" height="11" fill="#fff" stroke="#9a9a9a"/><rect x="5" y="3" width="9" height="11" fill="#fff" stroke="#8a8a8a"/><rect x="8" y="5" width="3" height="6" fill="#8a9ab0"/><rect x="12" y="12" width="8" height="8" rx="1" fill="#4f9a4f"/><path d="M16 13.5 V18.5 M13.5 16 H18.5" stroke="#fff" stroke-width="1.8"/></svg>
<svg class="r" style="left:83.7px;top:204.2px;" width="15" height="15" viewBox="0 0 20 20"><path d="M1 9 Q9 1 17 9 Q9 15 1 9 Z" fill="#dfe8f3" stroke="#34568a" stroke-width="1.2"/><circle cx="9" cy="8.5" r="3" fill="#34568a"/><path d="M12 14 H19 L15.5 18 Z" fill="#111"/></svg>
<svg class="r" style="left:102.4px;top:204.2px;" width="15" height="15" viewBox="0 0 20 20"><path d="M1 2 H19 L12 10 V18 L8 16 V10 Z" fill="#4a8ad0" stroke="#2a5a9a" stroke-width="1"/><path d="M1 2 H19 L17 4.5 H3 Z" fill="#f0d030"/></svg>
<svg class="r" style="left:122.3px;top:204.2px;" width="15" height="15" viewBox="0 0 20 20"><text x="7" y="12" text-anchor="middle" font-size="15" font-family="Liberation Serif" fill="#333">ε</text><rect x="11" y="12" width="7" height="7" fill="#eee" stroke="#999"/></svg>
<svg class="r" style="left:153.9px;top:204.2px;" width="15" height="15" viewBox="0 0 20 20"><rect x="1" y="4" width="10" height="12" fill="#f0d030" stroke="#a89020" stroke-width="0.8"/><path d="M13 1 V15 M10 12 L13 17 L16 12" fill="none" stroke="#3f7fc8" stroke-width="2.5"/><path d="M3 7 H9 M3 10 H9 M3 13 H9" stroke="#fff"/></svg>
<svg class="r" style="left:173.5px;top:204.2px;" width="15" height="15" viewBox="0 0 20 20"><rect x="1" y="4" width="10" height="12" fill="#f0d030" stroke="#a89020" stroke-width="0.8"/><path d="M13 18 V4 M10 7 L13 2 L16 7" fill="none" stroke="#3f7fc8" stroke-width="2.5"/><path d="M3 7 H9 M3 10 H9 M3 13 H9" stroke="#fff"/></svg>
<svg class="r" style="left:191.5px;top:204.2px;" width="15" height="15" viewBox="0 0 20 20"><rect x="1.5" y="2.5" width="13" height="13" fill="#fff" stroke="#777" stroke-width="1.2"/><circle cx="15" cy="15" r="4" fill="#d02020"/><path d="M12.5 15 H17.5" stroke="#fff" stroke-width="1.5"/></svg>
<svg class="r" style="left:141.6px;top:209.7px;" width="8" height="5" viewBox="0 0 8 5"><path d="M0 0 H8 L4 4.5 Z" fill="#111"/></svg>
<svg class="r" style="left:1359.5px;top:204.0px;" width="15" height="15" viewBox="0 0 20 20"><rect x="1" y="4" width="10" height="12" fill="#f0d030" stroke="#a89020" stroke-width="0.8"/><path d="M13 18 V4 M10 7 L13 2 L16 7" fill="none" stroke="#3f7fc8" stroke-width="2.5"/><path d="M3 7 H9 M3 10 H9 M3 13 H9" stroke="#fff"/></svg>
<svg class="r" style="left:1378.5px;top:204.0px;" width="15" height="15" viewBox="0 0 20 20"><circle cx="10" cy="10" r="6.5" fill="#4a8ad0"/><text x="10" y="14" text-anchor="middle" font-size="10" font-weight="700" font-style="italic" fill="#fff" font-family="Liberation Serif">i</text></svg>
<div class="r" style="left:68px;top:257.5px;width:133.7px;height:29.2px;background:none;border:3px solid #e8141b;box-sizing:border-box;"></div>
<div class="r" style="left:1165.3px;top:322.3px;width:132.2px;height:43.7px;background:none;border:3px solid #e8141b;box-sizing:border-box;"></div>
<svg class="r" style="left:0px;top:0px;pointer-events:none;" width="1600" height="864" viewBox="0 0 1600 864"><path d="M749 93 C750.1 106.3 751.0 146.5 755.5 173 C760.0 199.5 766.8 223.7 776 252 C785.2 280.3 798.5 313.1 810.7 342.6 C822.9 372.2 834.9 400.7 849.3 429.3 C863.7 457.9 882.9 491.2 897 514 C911.1 536.8 923.5 552.7 934 566 C944.5 579.3 949.9 583.3 960 593.7 C970.1 604.1 987.2 621.0 994.9 628.3 C1002.6 635.6 1004.1 636.0 1006 637.5" fill="none" stroke="#000" stroke-width="2.1"/>
<path d="M1014 643.3 L995.5 637 L1000 632.5 L1003 628.3 Z" fill="#000" stroke="#000" stroke-width="1" stroke-linejoin="round"/>
<ellipse cx="749" cy="61" rx="30" ry="30.7" fill="none" stroke="#ee1111" stroke-width="3.2"/></svg>
</body></html>
